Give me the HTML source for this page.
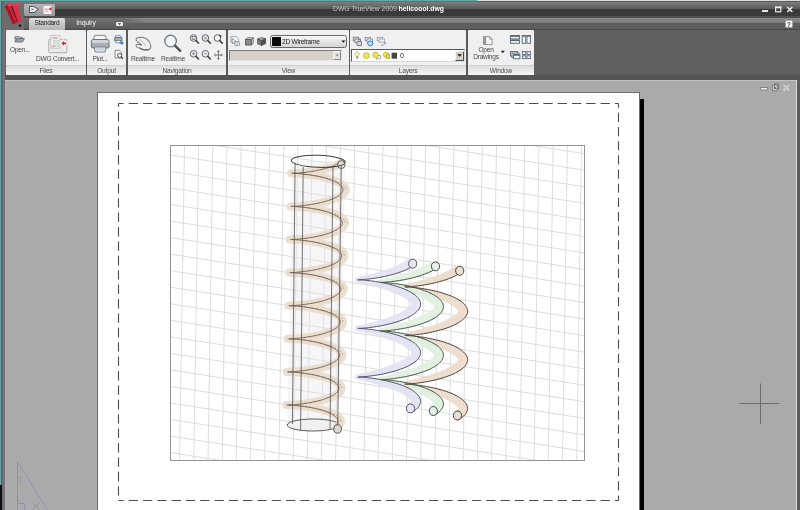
<!DOCTYPE html>
<html><head><meta charset="utf-8">
<style>
*{box-sizing:border-box;margin:0;padding:0}
html,body{width:800px;height:510px;overflow:hidden;background:#aaa;font-family:"Liberation Sans",sans-serif;}
#root{filter:blur(0.35px);position:absolute;left:0;top:0;width:800px;height:510px;overflow:hidden;background:#aaaaaa}
.abs{position:absolute}
.panel{position:absolute;top:30px;height:45px;background:#f0f0f0;border-radius:1px}
.plabel{position:absolute;left:0;right:0;bottom:0;height:10px;background:linear-gradient(#dedede,#f4f4f4);border-top:1px solid #d0d0d0;font-size:6.6px;line-height:9px;text-align:center;color:#505050;letter-spacing:-0.2px}
.t{position:absolute;font-size:6.6px;color:#484848;white-space:nowrap;line-height:8px;text-align:center;letter-spacing:-0.25px}
svg{position:absolute;left:0;top:0;overflow:visible}
</style></head><body><div id="root">

<!-- chrome backgrounds -->
<div class="abs" style="left:0;top:0;width:800px;height:80px;background:#606060"></div>
<div class="abs" style="left:0;top:2px;width:800px;height:7px;background:linear-gradient(#7e7e7e,#585858)"></div>
<div class="abs" style="left:0;top:9px;width:800px;height:7px;background:#3a3a3a"></div>
<div class="abs" style="left:0;top:16px;width:800px;height:2px;background:#4e4e4e"></div>
<div class="abs" style="left:0;top:18px;width:800px;height:5px;background:linear-gradient(#8a8a8a,#7a7a7a)"></div>
<div class="abs" style="left:0;top:23px;width:800px;height:6px;background:#5c5e5e"></div>
<div class="abs" style="left:0;top:29px;width:800px;height:1px;background:#474949"></div>
<div class="abs" style="left:0;top:75px;width:800px;height:5px;background:#545454"></div>
<!-- top border -->
<div class="abs" style="left:0;top:0;width:800px;height:1px;background:#dcdcdc"></div>
<div class="abs" style="left:0;top:1px;width:800px;height:1px;background:#5a5a5a"></div>
<div class="abs" style="left:0;top:0;width:477px;height:1px;background:#62a6a8"></div><div class="abs" style="left:0;top:1px;width:477px;height:1px;background:#4a7a80"></div>

<!-- doc area -->
<div class="abs" style="left:5px;top:80px;width:792px;height:430px;background:#aaaaaa;border-top:1px solid #c4c4c4"></div>
<div class="abs" style="left:796px;top:80px;width:1px;height:430px;background:#dadada"></div>
<div class="abs" style="left:797px;top:80px;width:3px;height:430px;background:#5c5c5c"></div>
<!-- left frame -->
<div class="abs" style="left:2px;top:30px;width:1px;height:480px;background:#686c78"></div><div class="abs" style="left:3px;top:30px;width:2px;height:480px;background:#7a7076"></div><div class="abs" style="left:5px;top:81px;width:1px;height:429px;background:#b0b0ad"></div><div class="abs" style="left:2px;top:2px;width:2px;height:28px;background:#565656"></div>
<div class="abs" style="left:0;top:0;width:1px;height:485px;background:#66a4a6"></div><div class="abs" style="left:1px;top:1px;width:1px;height:484px;background:#46686e"></div>
<div class="abs" style="left:0;top:485px;width:2px;height:25px;background:#101010"></div>

<!-- app button + quick access -->
<div class="abs" style="left:2px;top:3px;width:22px;height:27px;background:#6c6c6c"></div>
<div class="abs" style="left:24px;top:4px;width:31px;height:12px;background:linear-gradient(#b4b4b4,#989898);border-radius:1px"></div>
<!-- tabs -->
<div class="abs" style="left:24px;top:18px;width:120px;height:11px;background:linear-gradient(#707070,#5a5a5a);-webkit-mask-image:linear-gradient(90deg,#000 80%,transparent);mask-image:linear-gradient(90deg,#000 80%,transparent)"></div>
<div class="abs" style="left:29px;top:18px;width:36px;height:12px;background:linear-gradient(#dcdcdc,#b4b4b4);border-radius:2px 2px 0 0"></div>
<div class="t" style="left:29px;top:19px;width:36px;color:#1c1c1c;font-size:6.6px">Standard</div>
<div class="t" style="left:70px;top:19px;width:32px;color:#f4f4f4;font-size:6.8px;letter-spacing:-0.15px">Inquiry</div>
<div class="abs" style="left:116px;top:22px;width:7px;height:4px;background:#e8e8e8;border-radius:1px"></div>
<!-- title -->
<div class="t" style="left:333px;top:5px;color:#c4c4c4;font-size:6.8px;letter-spacing:0;text-align:left">DWG TrueView 2009 <b style="color:#fff">helicoool.dwg</b></div>

<!-- panels -->
<div class="panel" style="left:6px;width:80px"><div class="plabel">Files</div></div>
<div class="panel" style="left:87px;width:39px"><div class="plabel">Output</div></div>
<div class="panel" style="left:128px;width:98px"><div class="plabel">Navigation</div></div>
<div class="panel" style="left:228px;width:121px"><div class="plabel">View</div></div>
<div class="panel" style="left:350px;width:116px"><div class="plabel">Layers</div></div>
<div class="panel" style="left:468px;width:66px"><div class="plabel">Window</div></div>
<div class="abs" style="left:86px;top:30px;width:1px;height:45px;background:#5a5a5a"></div>
<div class="abs" style="left:126px;top:30px;width:2px;height:45px;background:#5a5a5a"></div>
<div class="abs" style="left:226px;top:30px;width:2px;height:45px;background:#5a5a5a"></div>
<div class="abs" style="left:349px;top:30px;width:1px;height:45px;background:#5a5a5a"></div>
<div class="abs" style="left:466px;top:30px;width:2px;height:45px;background:#5a5a5a"></div>

<!-- panel texts -->
<div class="t" style="left:8px;top:46px;width:24px">Open...</div>
<div class="t" style="left:34px;top:55px;width:47px">DWG Convert...</div>
<div class="t" style="left:88px;top:55px;width:24px">Plot...</div>
<div class="t" style="left:129px;top:55px;width:28px">Realtime</div>
<div class="t" style="left:159px;top:55px;width:28px">Realtime</div>
<div class="t" style="left:471px;top:46px;width:30px">Open</div>
<div class="t" style="left:471px;top:53px;width:30px">Drawings</div>

<!-- view dropdowns -->
<div class="abs" style="left:270px;top:35px;width:77px;height:13px;border:1px solid #686868;border-radius:2.5px;background:linear-gradient(#f6f6f6,#d4d4d4)"></div>
<div class="abs" style="left:272px;top:37px;width:9px;height:9px;background:#0c0c0c"></div>
<div class="t" style="left:282px;top:38px;color:#202020;font-size:6.6px;text-align:left">2D Wireframe</div>
<div class="abs" style="left:229px;top:49.5px;width:113px;height:11.5px;background:#d6d2ca;border:1px solid #7c7c7c;border-right-color:#e8e8e8;border-bottom-color:#e8e8e8"></div>
<div class="abs" style="left:333px;top:51px;width:8px;height:9px;background:#e4e2de;border:1px solid #f4f4f4;border-right-color:#8c8c8c;border-bottom-color:#8c8c8c"></div>
<!-- layers dropdown -->
<div class="abs" style="left:351px;top:49px;width:114px;height:12.5px;background:#fff;border:1px solid #585858;border-right-color:#d8d8d8;border-bottom-color:#d8d8d8"></div>
<div class="abs" style="left:455px;top:51px;width:9px;height:9.5px;background:#d4d0c8;border:1px solid #f0f0f0;border-right-color:#505050;border-bottom-color:#505050"></div>
<div class="t" style="left:400px;top:51.7px;color:#202020;font-size:7px;text-align:left">0</div>

<!-- paper -->
<div class="abs" style="left:640px;top:99px;width:4px;height:411px;background:#000"></div>
<div class="abs" style="left:97px;top:92px;width:543px;height:420px;background:#fff;border:1px solid #6e6e6e"></div>

<svg width="800" height="510" viewBox="0 0 800 510">
<!-- ICONS -->
<!-- app logo -->
<g>
<path d="M4.8 6 L9.6 4.8 L17.4 22.2 L12.8 24.6 Z" fill="#a41626"/>
<path d="M7.6 5.2 L9.6 4.8 L17.4 22.2 L15.6 23.2 Z" fill="#cc2236"/>
<path d="M10.4 5 L12 4.6 L18.6 21.6 L17.4 22.2 Z" fill="#64141f"/>
<path d="M12 4.4 L16.8 3.8 L21.4 20.2 L18.2 22.4 Z" fill="#e22e42"/>
<path d="M7.4 3.2 L20 2.8 L20.8 5.4 L8 6.4 Z" fill="#ea3c4e"/>
<circle cx="20" cy="25.6" r="1.2" fill="#0a0a0a"/>
</g>
<!-- quick access icons -->
<g>
<path d="M29.5 6.5 h4.2 l4.6 2.8 l-4.2 3.2 h-4.6 z" fill="#e8eef4" stroke="#4a5058" stroke-width="1"/>
<path d="M31.5 8.2 l3 1.2 l-3 1.4 z" fill="#7a8aa0"/>
<rect x="43.5" y="6" width="8" height="8" fill="#f6f6f6"/>
<rect x="44.5" y="8" width="4" height="4.5" fill="#e8c8c8"/>
<path d="M51.5 7 l-3 2 l3 2 z" fill="#d82030"/>
</g>
<!-- tab small button arrow -->
<path d="M118 23.2 h3 l-1.5 1.8 z" fill="#303030"/>
<!-- help -->
<rect x="785.5" y="20.5" width="7" height="7" rx="1" fill="#f4f4f4" stroke="#9a9a9a" stroke-width="0.6"/>
<text x="789" y="26.6" font-size="7" font-weight="bold" text-anchor="middle" fill="#505050" font-family="Liberation Sans">?</text>
<!-- window controls -->
<rect x="762" y="10" width="6" height="2" fill="#e8e8e8"/>
<rect x="775.6" y="7.2" width="5.2" height="4.6" fill="none" stroke="#e8e8e8" stroke-width="1.2"/>
<rect x="775" y="6.6" width="6.4" height="1.6" fill="#e8e8e8"/>
<path d="M787.3 7 l5 5 M792.3 7 l-5 5" stroke="#f0f0f0" stroke-width="1.5"/>
<!-- doc controls -->
<rect x="760.5" y="87.5" width="7" height="2.4" fill="#f0f0f0" stroke="#7a7a7a" stroke-width="0.8"/>
<rect x="772.8" y="85.2" width="4.4" height="5.6" fill="#ececec" stroke="#707070" stroke-width="0.9"/>
<rect x="774.6" y="83.8" width="4" height="5" fill="none" stroke="#707070" stroke-width="0.8"/>
<rect x="774.4" y="87" width="1.4" height="1.8" fill="#505050"/>
<path d="M783.6 85 l5.4 5.4 M789 85 l-5.4 5.4" stroke="#f0f0f0" stroke-width="1.6"/>
<path d="M783.6 85 l5.4 5.4 M789 85 l-5.4 5.4" stroke="#808080" stroke-width="0.5"/>

<!-- FILES: open folder -->
<g>
<path d="M15.2 36.6 h4 l0.8 1 h2.4 v1.2 h-7.2 z" fill="#c8ccd4" stroke="#6a7078" stroke-width="0.8"/>
<path d="M15.2 42 l1.6 -3.4 h7.6 l-2 3.4 z" fill="#9aa4b4" stroke="#5a6270" stroke-width="0.8"/>
<path d="M15.2 37 v5" stroke="#6a7078" stroke-width="0.8"/>
</g>
<!-- DWG convert -->
<g>
<rect x="48.8" y="39.2" width="18" height="13.4" rx="1" fill="#ebebeb" stroke="#b6b6b6" stroke-width="1.1"/>
<rect x="50.8" y="35.4" width="9.2" height="12.8" fill="#f8f8f8" stroke="#c0c0c0" stroke-width="0.9"/>
<rect x="52" y="36.8" width="6" height="2.2" fill="#e4b8c0"/>
<rect x="53.4" y="40" width="5.4" height="6.4" fill="#d4e8dc" stroke="#b4ccbc" stroke-width="0.6"/>
<rect x="51.6" y="45.6" width="3.6" height="1.6" fill="#dca8b4"/>
<ellipse cx="63.8" cy="43.2" rx="3.6" ry="3.8" fill="#fbe9ec"/>
<path d="M61.4 43.3 l2.6 -2.4 v1.5 h2.2 v1.9 h-2.2 v1.5 z" fill="#c82842"/>
</g>
<!-- printer big -->
<g>
<path d="M94.6 35.4 h10.8 l1.2 4.6 h-13.2 z" fill="#f6f6f6" stroke="#7c8088" stroke-width="0.9"/>
<rect x="91.4" y="39.6" width="17.6" height="8.4" rx="1.6" fill="#aab0b8" stroke="#5c626a" stroke-width="0.9"/>
<rect x="91.8" y="40" width="16.8" height="3" rx="1" fill="#cfd4da"/>
<path d="M94.2 47 h12 l-1 5 h-10 z" fill="#dfe5ea" stroke="#6c727a" stroke-width="0.8"/>
<rect x="95.4" y="48.6" width="9.6" height="1" fill="#a8c8d0"/>
</g>
<!-- small printer w/ blue bg -->
<g>
<rect x="113" y="33.6" width="11" height="12" rx="1" fill="#e6f0fa"/>
<path d="M115.8 35.6 h4.8 l0.6 2 h-6 z" fill="#fff" stroke="#6a7078" stroke-width="0.7"/>
<rect x="114.6" y="37.4" width="7.4" height="3.8" rx="0.8" fill="#a8b0ba" stroke="#586068" stroke-width="0.8"/>
<rect x="115.8" y="40.6" width="5" height="2.2" fill="#e8eef2" stroke="#6a7078" stroke-width="0.6"/>
<path d="M119.4 42.4 h2.2 v-1.4 l2 2 l-2 2 v-1.4 h-2.2 z" fill="#2a5ea8"/>
</g>
<!-- page preview -->
<g>
<path d="M115 50.4 h4.6 l2 2 v5.6 h-6.6 z" fill="#f4f4f4" stroke="#70767e" stroke-width="0.8"/>
<circle cx="119.6" cy="55.4" r="2.1" fill="#e8f0f4" stroke="#4a5058" stroke-width="0.9"/>
<path d="M121.2 57 l1.8 1.8" stroke="#3a4048" stroke-width="1.2"/>
</g>
<!-- hand -->
<g>
<path d="M136.2 38.8 C136.6 37.6 140 37.2 143.6 37.6 C147.6 38.4 150.6 42.6 150.8 46.6 C150.6 49 148.4 50.2 146 50.2 C143.4 50.2 141.4 49.2 139.4 48 C137.8 47.6 136.2 47 136 45.8 C136 44.6 137.4 44.2 138.6 44.4 L140.8 44.6 C140 43.2 138.2 42.4 137 41.4 C136.2 40.6 136 39.6 136.2 38.8 Z" fill="#f2f2f2" stroke="#848484" stroke-width="1.1"/>
<path d="M139.4 48 C142 49.6 146 50.2 148.6 49.4" fill="none" stroke="#6a6a6a" stroke-width="1.2"/>
<circle cx="141" cy="44.8" r="0.9" fill="#606060"/>
<path d="M138.5 39.5 C141.5 40.5 144 42.5 145.5 46" fill="none" stroke="#d0d0d0" stroke-width="1.4"/>
</g>
<!-- magnifier big -->
<g>
<circle cx="170.6" cy="41" r="5.8" fill="#eef6f8" stroke="#70747a" stroke-width="1.3"/>
<path d="M175.2 45.8 l5 5" stroke="#505050" stroke-width="2.4" stroke-linecap="round"/>
</g>
<!-- small zoom icons -->
<g fill="#f0f4f6" stroke="#50565c" stroke-width="0.9">
<circle cx="193.6" cy="38" r="3.3"/><circle cx="205.4" cy="38" r="3.3"/><circle cx="217.4" cy="38" r="3.3"/>
<circle cx="193.6" cy="53.8" r="3.3"/><circle cx="205.4" cy="53.8" r="3.3"/>
</g>
<g stroke="#383c40" stroke-width="1.5" stroke-linecap="round">
<path d="M196 40.6 l2.6 2.6 M207.8 40.6 l2.6 2.6 M219.8 40.6 l2.6 2.6 M196 56.4 l2.6 2.6 M207.8 56.4 l2.6 2.6"/>
</g>
<g stroke="#60666c" stroke-width="0.7" fill="none">
<rect x="192.2" y="36.4" width="2.8" height="3.2"/>
<path d="M203.6 36.2 l3.6 3.6 M207.2 36.2 l-3.6 3.6"/>
<path d="M219 35 l2.4 1 l-1.6 1.4" stroke="#202020" stroke-width="0.9"/>
<path d="M192 53.8 h3.2 M193.6 52.2 v3.2"/>
<path d="M203.8 53.8 h3.2"/>
</g>
<g stroke="#70767c" stroke-width="1" fill="none">
<path d="M214.4 55 h8 M218.4 50.4 v9.2"/>
<path d="M214.4 55 l1.4 -1.2 M214.4 55 l1.4 1.2 M222.4 55 l-1.4 -1.2 M222.4 55 l-1.4 1.2 M218.4 50.4 l-1.2 1.4 M218.4 50.4 l1.2 1.4 M218.4 59.6 l-1.2 -1.4 M218.4 59.6 l1.2 -1.4" stroke-width="0.8"/>
</g>
<!-- view icons -->
<g>
<path d="M230.8 36.6 h5.4 l2 2 v3.4 h-7.4 z" fill="#fafafa" stroke="#8a9098" stroke-width="0.8"/>
<path d="M232 38.6 l0.4 5.2 l1.4 -1.4 l1.2 2 l0.9 -0.5 l-1.2 -2 l1.9 -0.3 z" fill="#fff" stroke="#50565e" stroke-width="0.6"/>
<rect x="234.6" y="41.6" width="5" height="4" rx="0.8" fill="#c8d6e4" stroke="#7c8c9c" stroke-width="0.7"/>
<rect x="245.4" y="39.6" width="6" height="5.4" fill="#8c8c8c" stroke="#484848" stroke-width="0.8"/>
<path d="M245.4 39.6 l1.8 -1.8 h6 v5.4 l-1.8 1.8 M251.4 39.6 l1.8 -1.8" fill="none" stroke="#484848" stroke-width="0.8"/>
<path d="M257.6 39 l4 1.4 v5 l-4 -1.6 z" fill="#7a7a7a" stroke="#404040" stroke-width="0.7"/>
<path d="M261.6 40.4 l4 -1.6 v4.8 l-4 1.8 z" fill="#505050" stroke="#404040" stroke-width="0.7"/>
<path d="M257.6 39 l4 -1.4 l4 1.2 l-4 1.6 z" fill="#b4b4b4" stroke="#404040" stroke-width="0.7"/>
</g>
<!-- dropdown arrows -->
<path d="M341.4 40.4 h4 l-2 2.4 z" fill="#101010"/>
<path d="M335.4 54.4 h3.6 l-1.8 2.2 z" fill="#8c8c8c"/>
<path d="M457.4 54.2 h4.4 l-2.2 2.6 z" fill="#101010"/>
<path d="M500.8 50.8 h4 l-2 2.4 z" fill="#202020"/>
<!-- layer icons row -->
<g>
<rect x="353.2" y="37.2" width="5.4" height="3.8" fill="#ececec" stroke="#6c7278" stroke-width="0.8"/>
<rect x="355" y="39" width="5.4" height="3.8" fill="#ececec" stroke="#6c7278" stroke-width="0.8"/>
<rect x="357" y="41.6" width="4.6" height="4" rx="0.6" fill="#d8dce0" stroke="#5c6268" stroke-width="0.8"/>
<path d="M358.2 41.6 v-1 a1.1 1.1 0 0 1 2.2 0 v1" fill="none" stroke="#5c6268" stroke-width="0.7"/>
<rect x="365.2" y="37.4" width="5.4" height="3.2" fill="#eef2f8" stroke="#7a8cac" stroke-width="0.8"/>
<rect x="367" y="39" width="5.4" height="3.2" fill="#eef2f8" stroke="#7a8cac" stroke-width="0.8"/>
<circle cx="370.2" cy="43.4" r="2.5" fill="#c0dcf6" stroke="#3a7cc8" stroke-width="1"/>
<rect x="377.2" y="37.4" width="5.4" height="3.2" fill="#f0f4f8" stroke="#909cac" stroke-width="0.8"/>
<rect x="379" y="39" width="5.4" height="3.2" fill="#f0f4f8" stroke="#909cac" stroke-width="0.8"/>
<path d="M381 45.2 c2.8 0.4 4.2 -0.8 4 -2.8 l1.1 1.1 m-1.1 -1.1 l-1.1 0.9" fill="none" stroke="#8090a4" stroke-width="0.9"/>
</g>
<!-- layer dropdown inner icons -->
<g transform="translate(0 0.7)">
<path d="M357.2 51.2 c-2 0 -2.6 2.2 -1.4 3.6 l0.4 1 h2 l0.4 -1 c1.2 -1.4 0.6 -3.6 -1.4 -3.6 z" fill="#fdf8b0" stroke="#a8a060" stroke-width="0.6"/>
<rect x="356.2" y="56" width="2" height="1.8" fill="#8a8a8a"/>
<circle cx="366.4" cy="55" r="3" fill="#f0e848" stroke="#b4aa30" stroke-width="0.7"/>
<rect x="376.6" y="54.6" width="3.6" height="3.6" fill="#fafafa" stroke="#70767c" stroke-width="0.6"/>
<circle cx="375.6" cy="54.2" r="2.8" fill="#f0e848" stroke="#b4aa30" stroke-width="0.7"/>
<circle cx="386" cy="54" r="2.6" fill="#f0e848" stroke="#b4aa30" stroke-width="0.7"/>
<rect x="386.4" y="53.4" width="3.2" height="4.6" rx="0.6" fill="#e8dc50" stroke="#8c8630" stroke-width="0.6"/>
<rect x="391.6" y="52" width="5.4" height="6" fill="#45454d"/>
</g>
<!-- window panel icons -->
<g>
<path d="M483.4 36.6 h3.6 v7.8 h-3.6 z" fill="#9a9a9a" stroke="#787878" stroke-width="0.6"/>
<path d="M485.6 36.6 h4 l2.6 2.6 v5.4 h-6.6 z" fill="#f6f6f6" stroke="#808080" stroke-width="0.8"/>
<path d="M489.6 36.6 v2.6 h2.6" fill="none" stroke="#808080" stroke-width="0.7"/>
</g>
<g fill="#f2f4f6" stroke="#5a6474" stroke-width="0.9">
<rect x="510.5" y="35.5" width="9" height="3.4"/><rect x="510.5" y="39.9" width="9" height="3.4"/>
<rect x="522.2" y="35.5" width="3.6" height="7.8"/><rect x="526.9" y="35.5" width="3.6" height="7.8"/>
<rect x="510.5" y="51.5" width="7" height="4.6"/><rect x="512" y="53" width="7" height="4.6"/><rect x="513.5" y="54.6" width="6.4" height="4.2"/>
<rect x="522.4" y="51.6" width="3.4" height="2.8"/><rect x="527" y="51.6" width="3.4" height="2.8"/>
<rect x="522.4" y="55.8" width="3.4" height="2.8"/><rect x="527" y="55.8" width="3.4" height="2.8"/>
</g>
<g fill="#5a6474">
<rect x="510.5" y="35.5" width="9" height="1.4"/><rect x="510.5" y="39.9" width="9" height="1.2"/>
<rect x="522.2" y="35.5" width="3.6" height="1.2"/><rect x="526.9" y="35.5" width="3.6" height="1.2"/>
<rect x="513.5" y="54.6" width="6.4" height="1.2"/>
</g>


<!-- dashed margin -->
<g fill="none" stroke="#4c4c4c" stroke-width="1.1">
<path d="M118.5 103.5 H618.5" stroke-dasharray="9.3 5" stroke-dashoffset="4.1"/>
<path d="M118.5 500.5 H618.5" stroke-dasharray="9.3 5" stroke-dashoffset="4.1"/>
<path d="M118.5 103.5 V500.5" stroke-dasharray="9.4 5" stroke-dashoffset="6.1"/>
<path d="M618.5 103.5 V500.5" stroke-dasharray="9.2 4.975" stroke-dashoffset="4.9"/>
</g>
<!-- grid -->
<defs><clipPath id="gc"><rect x="170" y="145" width="414" height="315"/></clipPath></defs>
<g clip-path="url(#gc)"><path d="M170.3 145 L165.4 460 M184.5 145 L179.6 460 M198.7 145 L193.8 460 M212.9 145 L208 460 M227 145 L222.2 460 M241.2 145 L236.3 460 M255.4 145 L250.5 460 M269.6 145 L264.7 460 M283.8 145 L278.9 460 M297.9 145 L293.1 460 M312.1 145 L307.2 460 M326.3 145 L321.4 460 M340.5 145 L335.6 460 M354.7 145 L349.8 460 M368.8 145 L364 460 M383 145 L378.1 460 M397.2 145 L392.3 460 M411.4 145 L406.5 460 M425.6 145 L420.7 460 M439.7 145 L434.9 460 M453.9 145 L449 460 M468.1 145 L463.2 460 M482.3 145 L477.4 460 M496.5 145 L491.6 460 M510.6 145 L505.8 460 M524.8 145 L519.9 460 M539 145 L534.1 460 M553.2 145 L548.3 460 M567.4 145 L562.5 460 M581.5 145 L576.7 460 M595.7 145 L590.8 460 M170 72.1 L584 137.1 M170 88.6 L584 153.6 M170 105.2 L584 170.2 M170 121.7 L584 186.7 M170 138.3 L584 203.3 M170 154.8 L584 219.8 M170 171.3 L584 236.3 M170 187.9 L584 252.9 M170 204.4 L584 269.4 M170 221 L584 286 M170 237.5 L584 302.5 M170 254 L584 319 M170 270.6 L584 335.6 M170 287.1 L584 352.1 M170 303.7 L584 368.7 M170 320.2 L584 385.2 M170 336.7 L584 401.7 M170 353.3 L584 418.3 M170 369.8 L584 434.8 M170 386.4 L584 451.4 M170 402.9 L584 467.9 M170 419.4 L584 484.4 M170 436 L584 501 M170 452.5 L584 517.5" fill="none" stroke="#d9d9d9" stroke-width="0.9"/></g>
<rect x="170.5" y="145.5" width="414" height="315" fill="none" stroke="#949494" stroke-width="1"/>

<!-- cylinder -->
<path d="M292 161 L287.5 425 L339 425 L345.5 161 Z" fill="#e8e8ee" fill-opacity="0.4"/>
<ellipse cx="313.2" cy="425" rx="26" ry="6" fill="#f0f0f0" stroke="#484848" stroke-width="0.9"/>
<!-- helix band -->
<path d="M341.2 163.1 L340.3 163.6 L339.4 164 L338.5 164.5 L337.5 164.9 L336.5 165.4 L335.4 165.8 L334.3 166.2 L333.1 166.6 L331.9 167 L330.7 167.4 L329.4 167.8 L328.1 168.1 L326.8 168.5 L325.5 168.8 L324.1 169.1 L322.8 169.4 L321.4 169.7 L320 170 L318.6 170.3 L317.3 170.6 L315.9 170.8 L314.5 171 L313.2 171.2 L311.8 171.4 L310.5 171.6 L309.2 171.8 L307.9 172 L306.7 172.1 L305.4 172.3 L304.2 172.4 L303.1 172.5 L302 172.6 L300.9 172.7 L299.9 172.8 L298.9 172.9 L297.9 173 L297.1 173 L296.2 173.1 L295.5 173.1 L294.7 173.2 L294.1 173.2 L293.5 173.2 L293 173.3 L292.5 173.3 L292.1 173.3 L291.8 173.3 L291.5 173.3 L291.3 173.3 L291.2 173.3 L291.1 173.3 L291.1 173.3 L291.2 173.3 L291.3 173.3 L291.5 173.3 L291.8 173.3 L292.2 173.3 L292.6 173.3 L293.1 173.3 L293.6 173.4 L294.2 173.4 L294.9 173.4 L295.6 173.5 L296.4 173.5 L297.2 173.6 L298.1 173.6 L299 173.7 L300 173.8 L301 173.9 L302.1 174 L303.2 174.1 L304.4 174.2 L305.6 174.3 L306.8 174.5 L308.1 174.6 L309.3 174.8 L310.6 175 L312 175.2 L313.3 175.4 L314.7 175.6 L316 175.8 L317.4 176.1 L318.8 176.3 L320.1 176.6 L321.5 176.9 L322.8 177.2 L324.2 177.5 L325.5 177.8 L326.8 178.2 L328.1 178.5 L329.4 178.9 L330.6 179.3 L331.8 179.6 L333 180 L334.2 180.5 L335.3 180.9 L336.3 181.3 L337.3 181.7 L338.3 182.2 L339.2 182.6 L340.1 183.1 L340.9 183.6 L341.6 184.1 L342.3 184.6 L343 185.1 L343.5 185.6 L344 186.1 L344.5 186.6 L344.9 187.1 L345.2 187.6 L345.4 188.1 L345.6 188.7 L345.7 189.2 L345.8 189.7 L345.7 190.2 L345.6 190.8 L345.5 191.3 L345.2 191.8 L344.9 192.3 L344.6 192.8 L344.1 193.4 L343.7 193.9 L343.1 194.4 L342.5 194.9 L341.8 195.4 L341 195.9 L340.2 196.3 L339.4 196.8 L338.5 197.3 L337.5 197.7 L336.5 198.2 L335.5 198.6 L334.4 199 L333.2 199.4 L332.1 199.8 L330.9 200.2 L329.6 200.6 L328.4 201 L327.1 201.3 L325.7 201.7 L324.4 202 L323.1 202.3 L321.7 202.6 L320.3 202.9 L318.9 203.2 L317.6 203.5 L316.2 203.7 L314.8 204 L313.4 204.2 L312.1 204.4 L310.8 204.6 L309.4 204.8 L308.1 205 L306.9 205.1 L305.6 205.3 L304.4 205.4 L303.2 205.6 L302.1 205.7 L301 205.8 L299.9 205.9 L298.9 206 L297.9 206 L297 206.1 L296.1 206.2 L295.3 206.2 L294.6 206.3 L293.9 206.3 L293.2 206.3 L292.7 206.3 L292.1 206.4 L291.7 206.4 L291.3 206.4 L291 206.4 L290.8 206.4 L290.6 206.4 L290.5 206.4 L290.4 206.4 L290.4 206.4 L290.5 206.4 L290.7 206.4 L290.9 206.4 L291.2 206.4 L291.6 206.4 L292 206.4 L292.5 206.5 L293.1 206.5 L293.7 206.5 L294.4 206.5 L295.1 206.6 L295.9 206.6 L296.8 206.7 L297.7 206.8 L298.6 206.8 L299.6 206.9 L300.7 207 L301.8 207.1 L302.9 207.2 L304.1 207.3 L305.3 207.5 L306.5 207.6 L307.8 207.8 L309 208 L310.4 208.1 L311.7 208.3 L313 208.6 L314.4 208.8 L315.7 209 L317.1 209.3 L318.5 209.5 L319.8 209.8 L321.2 210.1 L322.6 210.4 L323.9 210.7 L325.2 211 L326.5 211.4 L327.8 211.7 L329.1 212.1 L330.3 212.5 L331.5 212.9 L332.7 213.3 L333.8 213.7 L334.9 214.1 L335.9 214.5 L336.9 215 L337.9 215.4 L338.8 215.9 L339.6 216.3 L340.4 216.8 L341.2 217.3 L341.8 217.8 L342.5 218.3 L343 218.8 L343.5 219.3 L343.9 219.8 L344.3 220.3 L344.6 220.9 L344.8 221.4 L345 221.9 L345.1 222.4 L345.1 223 L345 223.5 L344.9 224 L344.7 224.5 L344.5 225.1 L344.2 225.6 L343.8 226.1 L343.3 226.6 L342.8 227.1 L342.2 227.6 L341.6 228.1 L340.9 228.6 L340.1 229.1 L339.3 229.6 L338.5 230 L337.5 230.5 L336.6 230.9 L335.5 231.4 L334.5 231.8 L333.4 232.2 L332.2 232.7 L331 233.1 L329.8 233.4 L328.6 233.8 L327.3 234.2 L326 234.5 L324.7 234.9 L323.3 235.2 L322 235.5 L320.6 235.8 L319.2 236.1 L317.9 236.4 L316.5 236.6 L315.1 236.9 L313.7 237.1 L312.4 237.4 L311 237.6 L309.7 237.8 L308.4 237.9 L307.1 238.1 L305.8 238.3 L304.6 238.4 L303.4 238.6 L302.2 238.7 L301.1 238.8 L300 238.9 L298.9 239 L297.9 239.1 L297 239.2 L296.1 239.2 L295.2 239.3 L294.4 239.3 L293.7 239.4 L293 239.4 L292.4 239.4 L291.8 239.4 L291.3 239.5 L290.9 239.5 L290.5 239.5 L290.2 239.5 L290 239.5 L289.9 239.5 L289.8 239.5 L289.7 239.5 L289.8 239.5 L289.9 239.5 L290.1 239.5 L290.3 239.5 L290.7 239.5 L291 239.5 L291.5 239.5 L292 239.6 L292.6 239.6 L293.2 239.6 L293.9 239.7 L294.7 239.7 L295.5 239.7 L296.3 239.8 L297.3 239.9 L298.2 239.9 L299.2 240 L300.3 240.1 L301.4 240.2 L302.6 240.4 L303.7 240.5 L304.9 240.6 L306.2 240.8 L307.5 240.9 L308.7 241.1 L310.1 241.3 L311.4 241.5 L312.7 241.7 L314.1 241.9 L315.5 242.2 L316.8 242.4 L318.2 242.7 L319.6 243 L320.9 243.3 L322.3 243.6 L323.6 243.9 L324.9 244.2 L326.2 244.6 L327.5 244.9 L328.8 245.3 L330 245.7 L331.2 246.1 L332.3 246.5 L333.4 246.9 L334.5 247.3 L335.5 247.8 L336.5 248.2 L337.5 248.7 L338.4 249.1 L339.2 249.6 L340 250.1 L340.7 250.6 L341.3 251 L341.9 251.5 L342.5 252.1 L343 252.6 L343.4 253.1 L343.7 253.6 L344 254.1 L344.2 254.6 L344.3 255.2 L344.4 255.7 L344.4 256.2 L344.3 256.7 L344.2 257.3 L344 257.8 L343.7 258.3 L343.4 258.8 L343 259.3 L342.5 259.9 L342 260.4 L341.4 260.9 L340.7 261.4 L340 261.9 L339.2 262.3 L338.4 262.8 L337.5 263.3 L336.6 263.7 L335.6 264.2 L334.6 264.6 L333.5 265 L332.4 265.5 L331.2 265.9 L330 266.3 L328.8 266.7 L327.5 267 L326.2 267.4 L324.9 267.7 L323.6 268.1 L322.3 268.4 L320.9 268.7 L319.5 269 L318.2 269.3 L316.8 269.6 L315.4 269.8 L314 270.1 L312.7 270.3 L311.3 270.5 L310 270.7 L308.6 270.9 L307.3 271.1 L306 271.3 L304.8 271.4 L303.5 271.6 L302.3 271.7 L301.2 271.8 L300.1 271.9 L299 272 L298 272.1 L297 272.2 L296 272.3 L295.1 272.3 L294.3 272.4 L293.5 272.4 L292.8 272.5 L292.1 272.5 L291.5 272.5 L291 272.6 L290.5 272.6 L290.1 272.6 L289.8 272.6 L289.5 272.6 L289.3 272.6 L289.1 272.6 L289.1 272.6 L289.1 272.6 L289.1 272.6 L289.3 272.6 L289.5 272.6 L289.7 272.6 L290.1 272.6 L290.5 272.6 L291 272.6 L291.5 272.7 L292.1 272.7 L292.7 272.7 L293.4 272.8 L294.2 272.8 L295 272.9 L295.9 272.9 L296.9 273 L297.8 273.1 L298.9 273.2 L299.9 273.3 L301.1 273.4 L302.2 273.5 L303.4 273.6 L304.6 273.8 L305.9 273.9 L307.1 274.1 L308.4 274.3 L309.8 274.5 L311.1 274.7 L312.5 274.9 L313.8 275.1 L315.2 275.4 L316.5 275.6 L317.9 275.9 L319.3 276.2 L320.6 276.5 L322 276.8 L323.3 277.1 L324.6 277.4 L325.9 277.8 L327.2 278.1 L328.4 278.5 L329.7 278.9 L330.8 279.3 L332 279.7 L333.1 280.1 L334.1 280.5 L335.2 281 L336.1 281.4 L337.1 281.9 L337.9 282.4 L338.7 282.8 L339.5 283.3 L340.2 283.8 L340.8 284.3 L341.4 284.8 L341.9 285.3 L342.4 285.8 L342.8 286.3 L343.1 286.8 L343.4 287.4 L343.6 287.9 L343.7 288.4 L343.7 288.9 L343.7 289.5 L343.6 290 L343.5 290.5 L343.2 291 L343 291.6 L342.6 292.1 L342.2 292.6 L341.7 293.1 L341.1 293.6 L340.5 294.1 L339.8 294.6 L339.1 295.1 L338.3 295.6 L337.5 296 L336.6 296.5 L335.6 297 L334.6 297.4 L333.6 297.8 L332.5 298.3 L331.4 298.7 L330.2 299.1 L329 299.5 L327.7 299.9 L326.5 300.2 L325.2 300.6 L323.9 300.9 L322.5 301.3 L321.2 301.6 L319.8 301.9 L318.5 302.2 L317.1 302.5 L315.7 302.7 L314.3 303 L312.9 303.2 L311.6 303.5 L310.2 303.7 L308.9 303.9 L307.6 304.1 L306.3 304.2 L305 304.4 L303.7 304.6 L302.5 304.7 L301.3 304.8 L300.2 305 L299.1 305.1 L298 305.2 L297 305.2 L296 305.3 L295.1 305.4 L294.2 305.5 L293.4 305.5 L292.6 305.5 L291.9 305.6 L291.3 305.6 L290.7 305.6 L290.2 305.7 L289.7 305.7 L289.3 305.7 L289 305.7 L288.7 305.7 L288.6 305.7 L288.4 305.7 L288.4 305.7 L288.4 305.7 L288.5 305.7 L288.6 305.7 L288.9 305.7 L289.2 305.7 L289.5 305.7 L289.9 305.7 L290.4 305.8 L291 305.8 L291.6 305.8 L292.3 305.8 L293 305.9 L293.8 305.9 L294.6 306 L295.5 306 L296.5 306.1 L297.5 306.2 L298.5 306.3 L299.6 306.4 L300.7 306.5 L301.9 306.6 L303.1 306.8 L304.3 306.9 L305.6 307.1 L306.8 307.2 L308.2 307.4 L309.5 307.6 L310.8 307.8 L312.2 308 L313.5 308.3 L314.9 308.5 L316.3 308.8 L317.6 309.1 L319 309.4 L320.4 309.7 L321.7 310 L323 310.3 L324.3 310.6 L325.6 311 L326.9 311.3 L328.1 311.7 L329.3 312.1 L330.5 312.5 L331.6 312.9 L332.7 313.3 L333.8 313.8 L334.8 314.2 L335.7 314.7 L336.6 315.1 L337.5 315.6 L338.3 316.1 L339 316.6 L339.7 317 L340.3 317.5 L340.9 318 L341.4 318.5 L341.8 319.1 L342.2 319.6 L342.5 320.1 L342.7 320.6 L342.9 321.1 L343 321.7 L343 322.2 L343 322.7 L342.9 323.2 L342.7 323.8 L342.5 324.3 L342.2 324.8 L341.8 325.3 L341.4 325.8 L340.8 326.4 L340.3 326.9 L339.6 327.4 L339 327.8 L338.2 328.3 L337.4 328.8 L336.5 329.3 L335.6 329.7 L334.7 330.2 L333.6 330.6 L332.6 331.1 L331.5 331.5 L330.3 331.9 L329.2 332.3 L327.9 332.7 L326.7 333.1 L325.4 333.4 L324.1 333.8 L322.8 334.1 L321.5 334.5 L320.1 334.8 L318.8 335.1 L317.4 335.4 L316 335.7 L314.6 335.9 L313.2 336.2 L311.9 336.4 L310.5 336.6 L309.2 336.8 L307.8 337 L306.5 337.2 L305.2 337.4 L303.9 337.6 L302.7 337.7 L301.5 337.8 L300.3 338 L299.2 338.1 L298.1 338.2 L297 338.3 L296 338.4 L295 338.4 L294.1 338.5 L293.3 338.6 L292.5 338.6 L291.7 338.7 L291 338.7 L290.4 338.7 L289.9 338.7 L289.4 338.8 L288.9 338.8 L288.5 338.8 L288.2 338.8 L288 338.8 L287.8 338.8 L287.7 338.8 L287.7 338.8 L287.7 338.8 L287.9 338.8 L288 338.8 L288.3 338.8 L288.6 338.8 L289 338.8 L289.4 338.8 L289.9 338.9 L290.5 338.9 L291.1 338.9 L291.8 338.9 L292.5 339 L293.3 339 L294.2 339.1 L295.1 339.2 L296.1 339.2 L297.1 339.3 L298.1 339.4 L299.2 339.5 L300.4 339.6 L301.5 339.8 L302.8 339.9 L304 340.1 L305.3 340.2 L306.5 340.4 L307.9 340.6 L309.2 340.8 L310.5 341 L311.9 341.2 L313.3 341.5 L314.6 341.7 L316 342 L317.4 342.2 L318.7 342.5 L320.1 342.8 L321.4 343.2 L322.7 343.5 L324 343.8 L325.3 344.2 L326.6 344.6 L327.8 344.9 L329 345.3 L330.1 345.7 L331.3 346.1 L332.4 346.6 L333.4 347 L334.4 347.4 L335.3 347.9 L336.2 348.4 L337.1 348.8 L337.8 349.3 L338.6 349.8 L339.2 350.3 L339.8 350.8 L340.4 351.3 L340.9 351.8 L341.3 352.3 L341.6 352.8 L341.9 353.3 L342.1 353.9 L342.3 354.4 L342.4 354.9 L342.4 355.4 L342.3 356 L342.2 356.5 L342 357 L341.7 357.5 L341.4 358.1 L341 358.6 L340.5 359.1 L340 359.6 L339.4 360.1 L338.8 360.6 L338.1 361.1 L337.3 361.6 L336.5 362 L335.6 362.5 L334.7 363 L333.7 363.4 L332.7 363.9 L331.6 364.3 L330.5 364.7 L329.3 365.1 L328.1 365.5 L326.9 365.9 L325.7 366.3 L324.4 366.6 L323.1 367 L321.7 367.3 L320.4 367.7 L319 368 L317.7 368.3 L316.3 368.6 L314.9 368.8 L313.5 369.1 L312.2 369.3 L310.8 369.6 L309.4 369.8 L308.1 370 L306.8 370.2 L305.4 370.4 L304.2 370.5 L302.9 370.7 L301.7 370.8 L300.5 371 L299.3 371.1 L298.2 371.2 L297.1 371.3 L296 371.4 L295 371.5 L294.1 371.6 L293.2 371.6 L292.4 371.7 L291.6 371.7 L290.8 371.8 L290.2 371.8 L289.6 371.8 L289 371.9 L288.5 371.9 L288.1 371.9 L287.8 371.9 L287.5 371.9 L287.3 371.9 L287.1 371.9 L287 371.9 L287 371.9 L287.1 371.9 L287.2 371.9 L287.4 371.9 L287.7 371.9 L288 371.9 L288.4 371.9 L288.9 371.9 L289.4 372 L290 372 L290.6 372 L291.3 372.1 L292.1 372.1 L292.9 372.2 L293.8 372.2 L294.7 372.3 L295.7 372.4 L296.7 372.4 L297.8 372.5 L298.9 372.7 L300 372.8 L301.2 372.9 L302.4 373 L303.7 373.2 L305 373.4 L306.2 373.5 L307.6 373.7 L308.9 373.9 L310.2 374.2 L311.6 374.4 L313 374.6 L314.3 374.9 L315.7 375.2 L317.1 375.4 L318.4 375.7 L319.8 376 L321.1 376.4 L322.4 376.7 L323.7 377 L325 377.4 L326.3 377.8 L327.5 378.1 L328.7 378.5 L329.8 378.9 L330.9 379.4 L332 379.8 L333 380.2 L334 380.7 L334.9 381.1 L335.8 381.6 L336.6 382.1 L337.4 382.5 L338.1 383 L338.7 383.5 L339.3 384 L339.8 384.5 L340.3 385 L340.7 385.6 L341 386.1 L341.3 386.6 L341.5 387.1 L341.6 387.6 L341.7 388.2 L341.7 388.7 L341.6 389.2 L341.5 389.8 L341.2 390.3 L341 390.8 L340.6 391.3 L340.2 391.8 L339.7 392.3 L339.2 392.8 L338.6 393.3 L337.9 393.8 L337.2 394.3 L336.4 394.8 L335.5 395.3 L334.6 395.8 L333.7 396.2 L332.7 396.7 L331.7 397.1 L330.6 397.5 L329.5 397.9 L328.3 398.3 L327.1 398.7 L325.9 399.1 L324.6 399.5 L323.3 399.8 L322 400.2 L320.7 400.5 L319.3 400.9 L318 401.2 L316.6 401.5 L315.2 401.7 L313.8 402 L312.5 402.3 L311.1 402.5 L309.7 402.7 L308.4 403 L307 403.2 L305.7 403.3 L304.4 403.5 L303.1 403.7 L301.9 403.8 L300.6 404 L299.4 404.1 L298.3 404.2 L297.2 404.3 L296.1 404.4 L295.1 404.5 L294.1 404.6 L293.2 404.7 L292.3 404.7 L291.4 404.8 L290.7 404.8 L290 404.9 L289.3 404.9 L288.7 404.9 L288.2 405 L287.7 405 L287.3 405 L287 405 L286.7 405 L286.5 405 L286.4 405 L286.4 405 L286.4 405 L286.4 405 L286.6 405 L286.8 405 L287.1 405 L287.4 405 L287.8 405 L288.3 405 L288.9 405.1 L289.5 405.1 L290.1 405.1 L290.9 405.2 L291.6 405.2 L292.5 405.3 L293.4 405.3 L294.3 405.4 L295.3 405.5 L296.3 405.6 L297.4 405.7 L298.5 405.8 L299.7 405.9 L300.9 406 L302.1 406.2 L303.4 406.3 L304.6 406.5 L306 406.7 L307.3 406.9 L308.6 407.1 L310 407.3 L311.3 407.6 L312.7 407.8 L314.1 408.1 L315.4 408.3 L316.8 408.6 L318.1 408.9 L319.5 409.2 L320.8 409.6 L322.1 409.9 L323.4 410.2 L324.7 410.6 L325.9 411 L327.1 411.4 L328.3 411.8 L329.5 412.2 L330.5 412.6 L331.6 413 L332.6 413.5 L333.6 413.9 L334.5 414.4 L335.4 414.8 L336.2 415.3 L336.9 415.8 L337.6 416.3 L338.2 416.8 L338.8 417.3 L339.3 417.8 L339.8 418.3 L340.1 418.8 L340.4 419.3 L340.7 419.9 L340.9 420.4 L341 420.9 L341 421.4 L341 422 L340.9 422.5 L340.7 423 L340.5 423.5 L340.2 424.1 L339.8 424.6 L339.4 425.1 L338.9 425.6 L338.3 426.1 L337.7 426.6 L337 427.1" fill="none" stroke="#eaded0" stroke-width="8" stroke-linejoin="round" stroke-linecap="round"/>
<path d="M291.1 173.3 L291.1 173.3 L291.2 173.3 L291.4 173.3 L291.6 173.3 L292 173.3 L292.3 173.3 L292.8 173.3 L293.3 173.4 L293.8 173.4 L294.4 173.4 L295.1 173.4 L295.9 173.5 L296.7 173.5 L297.5 173.6 L298.4 173.7 L299.4 173.7 L300.4 173.8 L301.4 173.9 L302.5 174 L303.7 174.1 L304.8 174.3 L306 174.4 L307.3 174.5 L308.5 174.7 L309.8 174.9 L311.1 175.1 L312.4 175.3 L313.8 175.5 L315.1 175.7 L316.5 175.9 L317.9 176.2 L319.2 176.4 L320.6 176.7 L321.9 177 L323.3 177.3 L324.6 177.6 L326 177.9 L327.3 178.3 L328.5 178.6 L329.8 179 L331 179.4 L332.2 179.8 L333.4 180.2 L334.5 180.6 L335.6 181 L336.6 181.4 L337.6 181.9 L338.6 182.3 L339.5 182.8 L340.3 183.3 L341.1 183.7 L341.8 184.2 L342.5 184.7 L343.1 185.2 L343.7 185.7 L344.2 186.2 L344.6 186.7 L345 187.2 L345.3 187.8 L345.5 188.3 L345.6 188.8 L345.7 189.3 L345.8 189.9 M290.4 206.4 L290.5 206.4 L290.6 206.4 L290.7 206.4 L291 206.4 L291.3 206.4 L291.6 206.4 L292.1 206.4 L292.6 206.5 L293.1 206.5 L293.8 206.5 L294.5 206.5 L295.2 206.6 L296 206.6 L296.8 206.7 L297.8 206.8 L298.7 206.8 L299.7 206.9 L300.8 207 L301.9 207.1 L303 207.2 L304.2 207.4 L305.4 207.5 L306.6 207.6 L307.8 207.8 L309.1 208 L310.4 208.2 L311.8 208.4 L313.1 208.6 L314.5 208.8 L315.8 209 L317.2 209.3 L318.5 209.5 L319.9 209.8 L321.3 210.1 L322.6 210.4 L324 210.7 L325.3 211 L326.6 211.4 L327.9 211.7 L329.1 212.1 L330.3 212.5 L331.5 212.9 L332.7 213.3 L333.8 213.7 L334.9 214.1 L336 214.5 L336.9 215 L337.9 215.4 L338.8 215.9 L339.6 216.4 L340.4 216.8 L341.2 217.3 L341.8 217.8 L342.5 218.3 L343 218.8 L343.5 219.3 L343.9 219.8 L344.3 220.3 L344.6 220.9 L344.8 221.4 L345 221.9 L345.1 222.4 L345.1 223 M289.7 239.5 L289.8 239.5 L289.9 239.5 L290 239.5 L290.3 239.5 L290.6 239.5 L291 239.5 L291.4 239.5 L291.9 239.6 L292.5 239.6 L293.1 239.6 L293.8 239.6 L294.5 239.7 L295.3 239.7 L296.2 239.8 L297.1 239.9 L298 239.9 L299 240 L300.1 240.1 L301.2 240.2 L302.3 240.3 L303.5 240.5 L304.7 240.6 L305.9 240.7 L307.2 240.9 L308.5 241.1 L309.8 241.3 L311.1 241.5 L312.4 241.7 L313.8 241.9 L315.1 242.1 L316.5 242.4 L317.9 242.6 L319.2 242.9 L320.6 243.2 L321.9 243.5 L323.3 243.8 L324.6 244.1 L325.9 244.5 L327.2 244.8 L328.4 245.2 L329.7 245.6 L330.9 246 L332 246.4 L333.1 246.8 L334.2 247.2 L335.3 247.6 L336.3 248.1 L337.2 248.5 L338.1 249 L339 249.5 L339.8 249.9 L340.5 250.4 L341.2 250.9 L341.8 251.4 L342.3 251.9 L342.8 252.4 L343.2 252.9 L343.6 253.4 L343.9 254 L344.1 254.5 L344.3 255 L344.4 255.5 L344.4 256.1 M289.1 272.6 L289.1 272.6 L289.2 272.6 L289.4 272.6 L289.6 272.6 L289.9 272.6 L290.3 272.6 L290.7 272.6 L291.2 272.7 L291.8 272.7 L292.4 272.7 L293.1 272.7 L293.8 272.8 L294.6 272.8 L295.5 272.9 L296.4 273 L297.4 273 L298.4 273.1 L299.4 273.2 L300.5 273.3 L301.6 273.4 L302.8 273.6 L304 273.7 L305.2 273.8 L306.5 274 L307.8 274.2 L309.1 274.4 L310.4 274.6 L311.7 274.8 L313.1 275 L314.5 275.2 L315.8 275.5 L317.2 275.7 L318.5 276 L319.9 276.3 L321.3 276.6 L322.6 276.9 L323.9 277.2 L325.2 277.6 L326.5 277.9 L327.8 278.3 L329 278.7 L330.2 279.1 L331.3 279.5 L332.5 279.9 L333.6 280.3 L334.6 280.7 L335.6 281.2 L336.5 281.6 L337.4 282.1 L338.3 282.6 L339.1 283 L339.8 283.5 L340.5 284 L341.1 284.5 L341.7 285 L342.1 285.5 L342.6 286 L342.9 286.5 L343.2 287.1 L343.5 287.6 L343.6 288.1 L343.7 288.6 L343.7 289.2 M288.4 305.7 L288.4 305.7 L288.5 305.7 L288.7 305.7 L288.9 305.7 L289.2 305.7 L289.6 305.7 L290 305.7 L290.5 305.8 L291.1 305.8 L291.7 305.8 L292.4 305.8 L293.2 305.9 L294 305.9 L294.8 306 L295.7 306.1 L296.7 306.1 L297.7 306.2 L298.7 306.3 L299.8 306.4 L300.9 306.5 L302.1 306.7 L303.3 306.8 L304.5 306.9 L305.8 307.1 L307.1 307.3 L308.4 307.5 L309.7 307.7 L311.1 307.9 L312.4 308.1 L313.8 308.3 L315.1 308.6 L316.5 308.8 L317.9 309.1 L319.2 309.4 L320.6 309.7 L321.9 310 L323.2 310.3 L324.5 310.7 L325.8 311 L327.1 311.4 L328.3 311.8 L329.5 312.2 L330.7 312.6 L331.8 313 L332.9 313.4 L333.9 313.8 L334.9 314.3 L335.9 314.7 L336.8 315.2 L337.6 315.7 L338.4 316.1 L339.1 316.6 L339.8 317.1 L340.4 317.6 L341 318.1 L341.5 318.6 L341.9 319.1 L342.2 319.6 L342.5 320.2 L342.8 320.7 L342.9 321.2 L343 321.7 L343 322.2 M287.7 338.8 L287.7 338.8 L287.8 338.8 L288 338.8 L288.3 338.8 L288.6 338.8 L288.9 338.8 L289.4 338.8 L289.9 338.9 L290.4 338.9 L291.1 338.9 L291.7 338.9 L292.5 339 L293.3 339 L294.1 339.1 L295 339.2 L296 339.2 L297 339.3 L298 339.4 L299.1 339.5 L300.3 339.6 L301.4 339.8 L302.6 339.9 L303.9 340 L305.1 340.2 L306.4 340.4 L307.7 340.6 L309 340.8 L310.4 341 L311.7 341.2 L313.1 341.4 L314.5 341.7 L315.8 341.9 L317.2 342.2 L318.6 342.5 L319.9 342.8 L321.2 343.1 L322.6 343.4 L323.9 343.8 L325.1 344.1 L326.4 344.5 L327.6 344.9 L328.8 345.3 L330 345.7 L331.1 346.1 L332.2 346.5 L333.2 346.9 L334.2 347.4 L335.2 347.8 L336.1 348.3 L336.9 348.8 L337.7 349.2 L338.4 349.7 L339.1 350.2 L339.7 350.7 L340.3 351.2 L340.8 351.7 L341.2 352.2 L341.6 352.7 L341.9 353.3 L342.1 353.8 L342.3 354.3 L342.3 354.8 L342.4 355.3 M287 371.9 L287.1 371.9 L287.2 371.9 L287.3 371.9 L287.6 371.9 L287.9 371.9 L288.2 371.9 L288.7 371.9 L289.2 372 L289.8 372 L290.4 372 L291.1 372 L291.8 372.1 L292.6 372.1 L293.5 372.2 L294.4 372.3 L295.3 372.3 L296.3 372.4 L297.4 372.5 L298.5 372.6 L299.6 372.7 L300.8 372.9 L302 373 L303.2 373.1 L304.5 373.3 L305.7 373.5 L307 373.7 L308.4 373.9 L309.7 374.1 L311.1 374.3 L312.4 374.5 L313.8 374.8 L315.1 375 L316.5 375.3 L317.9 375.6 L319.2 375.9 L320.6 376.2 L321.9 376.5 L323.2 376.9 L324.5 377.2 L325.7 377.6 L326.9 378 L328.1 378.4 L329.3 378.8 L330.4 379.2 L331.5 379.6 L332.6 380 L333.6 380.5 L334.5 380.9 L335.4 381.4 L336.2 381.9 L337 382.3 L337.8 382.8 L338.4 383.3 L339.1 383.8 L339.6 384.3 L340.1 384.8 L340.5 385.3 L340.9 385.8 L341.2 386.4 L341.4 386.9 L341.6 387.4 L341.7 387.9 L341.7 388.5 M286.4 405 L286.4 405 L286.5 405 L286.7 405 L286.9 405 L287.2 405 L287.6 405 L288 405 L288.5 405.1 L289.1 405.1 L289.7 405.1 L290.4 405.1 L291.1 405.2 L291.9 405.2 L292.8 405.3 L293.7 405.4 L294.6 405.4 L295.6 405.5 L296.7 405.6 L297.8 405.7 L298.9 405.8 L300.1 406 L301.3 406.1 L302.5 406.2 L303.8 406.4 L305.1 406.6 L306.4 406.8 L307.7 407 L309 407.2 L310.4 407.4 L311.7 407.6 L313.1 407.9 L314.5 408.1 L315.8 408.4 L317.2 408.7 L318.5 409 L319.9 409.3 L321.2 409.6 L322.5 410 L323.8 410.3 L325 410.7 L326.3 411.1 L327.5 411.5 L328.6 411.9 L329.8 412.3 L330.8 412.7 L331.9 413.1 L332.9 413.6 L333.8 414 L334.7 414.5 L335.6 415 L336.4 415.4 L337.1 415.9 L337.8 416.4 L338.4 416.9 L338.9 417.4 L339.4 417.9 L339.9 418.4 L340.2 418.9 L340.5 419.5 L340.7 420 L340.9 420.5 L341 421 L341 421.5" fill="none" stroke="#9c8a78" stroke-width="0.8" stroke-dasharray="1.6 1.6"/>
<path d="M338.7 163.1 L338 163.6 L337.2 164 L336.3 164.5 L335.4 164.9 L334.4 165.3 L333.4 165.8 L332.4 166.2 L331.4 166.6 L330.3 167 L329.1 167.4 L328 167.7 L326.8 168.1 L325.6 168.4 L324.4 168.8 L323.2 169.1 L321.9 169.4 L320.7 169.7 L319.4 170 L318.1 170.2 L316.9 170.5 L315.6 170.7 L314.3 171 L313.1 171.2 L311.9 171.4 L310.6 171.6 L309.4 171.8 L308.3 171.9 L307.1 172.1 L306 172.2 L304.9 172.4 L303.8 172.5 L302.8 172.6 L301.8 172.7 L300.8 172.8 L299.9 172.9 L299 173 L298.2 173 L297.4 173.1 L296.7 173.1 L296 173.2 L295.4 173.2 L294.8 173.2 L294.3 173.2 L293.8 173.3 L293.4 173.3 L293.1 173.3 L292.8 173.3 L292.6 173.3 L292.4 173.3 L292.3 173.3 L292.3 173.3 M292.3 173.3 L292.3 173.3 L292.4 173.3 L292.6 173.3 L292.8 173.3 L293.1 173.3 L293.4 173.3 L293.8 173.3 L294.3 173.4 L294.8 173.4 L295.4 173.4 L296 173.4 L296.7 173.5 L297.5 173.5 L298.3 173.6 L299.1 173.7 L300 173.7 L300.9 173.8 L301.9 173.9 L302.9 174 L303.9 174.1 L305 174.3 L306.1 174.4 L307.3 174.5 L308.5 174.7 L309.6 174.9 L310.9 175.1 L312.1 175.3 L313.3 175.5 L314.6 175.7 L315.8 175.9 L317.1 176.2 L318.4 176.4 L319.6 176.7 L320.9 177 L322.1 177.3 L323.4 177.6 L324.6 177.9 L325.8 178.3 L327 178.6 L328.2 179 L329.3 179.4 L330.4 179.8 L331.5 180.2 L332.5 180.6 L333.5 181 L334.5 181.4 L335.4 181.9 L336.3 182.3 L337.1 182.8 L337.9 183.3 L338.7 183.7 L339.3 184.2 L340 184.7 L340.5 185.2 L341 185.7 L341.5 186.2 L341.9 186.7 L342.2 187.2 L342.5 187.8 L342.7 188.3 L342.9 188.8 L342.9 189.3 L343 189.9 M343 189.9 L342.9 190.4 L342.8 190.9 L342.6 191.4 L342.4 191.9 L342.1 192.5 L341.8 193 L341.3 193.5 L340.9 194 L340.3 194.5 L339.7 195 L339.1 195.5 L338.4 196 L337.7 196.4 L336.9 196.9 L336 197.4 L335.1 197.8 L334.2 198.3 L333.2 198.7 L332.2 199.1 L331.1 199.5 L330 199.9 L328.9 200.3 L327.7 200.7 L326.5 201.1 L325.3 201.4 L324.1 201.8 L322.9 202.1 L321.6 202.4 L320.4 202.7 L319.1 203 L317.8 203.3 L316.5 203.5 L315.3 203.8 L314 204 L312.7 204.2 L311.5 204.4 L310.3 204.6 L309 204.8 L307.8 205 L306.7 205.2 L305.5 205.3 L304.4 205.4 L303.3 205.6 L302.3 205.7 L301.2 205.8 L300.3 205.9 L299.3 206 L298.4 206 L297.6 206.1 L296.8 206.2 L296.1 206.2 L295.4 206.3 L294.7 206.3 L294.1 206.3 L293.6 206.3 L293.2 206.4 L292.8 206.4 L292.4 206.4 L292.1 206.4 L291.9 206.4 L291.7 206.4 L291.7 206.4 L291.6 206.4 M291.6 206.4 L291.7 206.4 L291.7 206.4 L291.9 206.4 L292.1 206.4 L292.4 206.4 L292.8 206.4 L293.2 206.4 L293.6 206.5 L294.1 206.5 L294.7 206.5 L295.4 206.5 L296 206.6 L296.8 206.6 L297.6 206.7 L298.4 206.8 L299.3 206.8 L300.2 206.9 L301.2 207 L302.2 207.1 L303.3 207.2 L304.4 207.4 L305.5 207.5 L306.6 207.6 L307.8 207.8 L309 208 L310.2 208.2 L311.4 208.4 L312.6 208.6 L313.9 208.8 L315.2 209 L316.4 209.3 L317.7 209.5 L319 209.8 L320.2 210.1 L321.5 210.4 L322.7 210.7 L323.9 211 L325.1 211.4 L326.3 211.7 L327.5 212.1 L328.6 212.5 L329.7 212.9 L330.8 213.3 L331.9 213.7 L332.9 214.1 L333.8 214.5 L334.8 215 L335.6 215.4 L336.5 215.9 L337.2 216.4 L338 216.8 L338.7 217.3 L339.3 217.8 L339.9 218.3 L340.4 218.8 L340.8 219.3 L341.2 219.8 L341.5 220.3 L341.8 220.9 L342 221.4 L342.2 221.9 L342.3 222.4 L342.3 223 M342.3 223 L342.2 223.5 L342.1 224 L342 224.5 L341.7 225 L341.4 225.6 L341.1 226.1 L340.7 226.6 L340.2 227.1 L339.7 227.6 L339.1 228.1 L338.4 228.6 L337.7 229.1 L337 229.5 L336.2 230 L335.3 230.5 L334.4 230.9 L333.5 231.4 L332.5 231.8 L331.5 232.2 L330.4 232.6 L329.3 233 L328.2 233.4 L327 233.8 L325.9 234.2 L324.7 234.5 L323.4 234.9 L322.2 235.2 L321 235.5 L319.7 235.8 L318.4 236.1 L317.1 236.4 L315.9 236.6 L314.6 236.9 L313.3 237.1 L312.1 237.3 L310.8 237.5 L309.6 237.7 L308.4 237.9 L307.2 238.1 L306 238.3 L304.8 238.4 L303.7 238.5 L302.6 238.7 L301.6 238.8 L300.6 238.9 L299.6 239 L298.6 239.1 L297.8 239.1 L296.9 239.2 L296.1 239.3 L295.4 239.3 L294.7 239.4 L294.1 239.4 L293.5 239.4 L292.9 239.4 L292.5 239.5 L292.1 239.5 L291.7 239.5 L291.4 239.5 L291.2 239.5 L291.1 239.5 L291 239.5 L290.9 239.5 M290.9 239.5 L291 239.5 L291.1 239.5 L291.2 239.5 L291.4 239.5 L291.7 239.5 L292.1 239.5 L292.5 239.5 L292.9 239.6 L293.5 239.6 L294 239.6 L294.7 239.6 L295.4 239.7 L296.1 239.7 L296.9 239.8 L297.7 239.9 L298.6 239.9 L299.6 240 L300.5 240.1 L301.5 240.2 L302.6 240.3 L303.7 240.5 L304.8 240.6 L305.9 240.7 L307.1 240.9 L308.3 241.1 L309.5 241.3 L310.7 241.5 L312 241.7 L313.2 241.9 L314.5 242.1 L315.7 242.4 L317 242.6 L318.3 242.9 L319.5 243.2 L320.8 243.5 L322 243.8 L323.3 244.1 L324.5 244.5 L325.6 244.8 L326.8 245.2 L328 245.6 L329.1 246 L330.1 246.4 L331.2 246.8 L332.2 247.2 L333.1 247.6 L334.1 248.1 L335 248.5 L335.8 249 L336.6 249.5 L337.3 249.9 L338 250.4 L338.6 250.9 L339.2 251.4 L339.7 251.9 L340.1 252.4 L340.5 252.9 L340.9 253.4 L341.1 254 L341.4 254.5 L341.5 255 L341.6 255.5 L341.6 256.1 M341.6 256.1 L341.6 256.6 L341.5 257.1 L341.3 257.6 L341.1 258.1 L340.8 258.7 L340.4 259.2 L340 259.7 L339.5 260.2 L339 260.7 L338.4 261.2 L337.7 261.7 L337 262.2 L336.3 262.6 L335.5 263.1 L334.6 263.6 L333.7 264 L332.8 264.5 L331.8 264.9 L330.8 265.3 L329.7 265.7 L328.6 266.1 L327.5 266.5 L326.4 266.9 L325.2 267.3 L324 267.6 L322.8 268 L321.5 268.3 L320.3 268.6 L319 268.9 L317.7 269.2 L316.5 269.5 L315.2 269.7 L313.9 270 L312.6 270.2 L311.4 270.4 L310.1 270.6 L308.9 270.8 L307.7 271 L306.5 271.2 L305.3 271.4 L304.2 271.5 L303 271.6 L301.9 271.8 L300.9 271.9 L299.9 272 L298.9 272.1 L298 272.2 L297.1 272.2 L296.2 272.3 L295.4 272.4 L294.7 272.4 L294 272.5 L293.4 272.5 L292.8 272.5 L292.3 272.5 L291.8 272.6 L291.4 272.6 L291.1 272.6 L290.8 272.6 L290.5 272.6 L290.4 272.6 L290.3 272.6 L290.3 272.6 M290.3 272.6 L290.3 272.6 L290.4 272.6 L290.5 272.6 L290.8 272.6 L291.1 272.6 L291.4 272.6 L291.8 272.6 L292.3 272.7 L292.8 272.7 L293.4 272.7 L294 272.7 L294.7 272.8 L295.4 272.8 L296.2 272.9 L297.1 273 L298 273 L298.9 273.1 L299.9 273.2 L300.9 273.3 L301.9 273.4 L303 273.6 L304.1 273.7 L305.3 273.8 L306.4 274 L307.6 274.2 L308.8 274.4 L310 274.6 L311.3 274.8 L312.5 275 L313.8 275.2 L315.1 275.5 L316.3 275.7 L317.6 276 L318.9 276.3 L320.1 276.6 L321.4 276.9 L322.6 277.2 L323.8 277.6 L325 277.9 L326.1 278.3 L327.3 278.7 L328.4 279.1 L329.5 279.5 L330.5 279.9 L331.5 280.3 L332.5 280.7 L333.4 281.2 L334.3 281.6 L335.1 282.1 L335.9 282.6 L336.6 283 L337.3 283.5 L337.9 284 L338.5 284.5 L339 285 L339.5 285.5 L339.9 286 L340.2 286.5 L340.5 287.1 L340.7 287.6 L340.8 288.1 L340.9 288.6 L340.9 289.2 M340.9 289.2 L340.9 289.7 L340.8 290.2 L340.6 290.7 L340.4 291.2 L340.1 291.8 L339.7 292.3 L339.3 292.8 L338.8 293.3 L338.3 293.8 L337.7 294.3 L337.1 294.8 L336.4 295.3 L335.6 295.7 L334.8 296.2 L334 296.7 L333.1 297.1 L332.1 297.6 L331.1 298 L330.1 298.4 L329.1 298.8 L328 299.2 L326.8 299.6 L325.7 300 L324.5 300.4 L323.3 300.7 L322.1 301.1 L320.8 301.4 L319.6 301.7 L318.3 302 L317.1 302.3 L315.8 302.6 L314.5 302.8 L313.2 303.1 L312 303.3 L310.7 303.5 L309.5 303.7 L308.2 303.9 L307 304.1 L305.8 304.3 L304.6 304.5 L303.5 304.6 L302.4 304.7 L301.3 304.9 L300.2 305 L299.2 305.1 L298.2 305.2 L297.3 305.3 L296.4 305.3 L295.6 305.4 L294.8 305.5 L294 305.5 L293.3 305.6 L292.7 305.6 L292.1 305.6 L291.6 305.6 L291.1 305.7 L290.7 305.7 L290.4 305.7 L290.1 305.7 L289.9 305.7 L289.7 305.7 L289.6 305.7 L289.6 305.7 M289.6 305.7 L289.6 305.7 L289.7 305.7 L289.9 305.7 L290.1 305.7 L290.4 305.7 L290.7 305.7 L291.1 305.7 L291.6 305.8 L292.1 305.8 L292.7 305.8 L293.3 305.8 L294 305.9 L294.8 305.9 L295.5 306 L296.4 306.1 L297.3 306.1 L298.2 306.2 L299.2 306.3 L300.2 306.4 L301.2 306.5 L302.3 306.7 L303.4 306.8 L304.6 306.9 L305.7 307.1 L306.9 307.3 L308.1 307.5 L309.4 307.7 L310.6 307.9 L311.9 308.1 L313.1 308.3 L314.4 308.6 L315.7 308.8 L316.9 309.1 L318.2 309.4 L319.4 309.7 L320.7 310 L321.9 310.3 L323.1 310.7 L324.3 311 L325.5 311.4 L326.6 311.8 L327.7 312.2 L328.8 312.6 L329.8 313 L330.8 313.4 L331.8 313.8 L332.7 314.3 L333.6 314.7 L334.4 315.2 L335.2 315.7 L335.9 316.1 L336.6 316.6 L337.2 317.1 L337.8 317.6 L338.3 318.1 L338.8 318.6 L339.2 319.1 L339.5 319.6 L339.8 320.2 L340 320.7 L340.1 321.2 L340.2 321.7 L340.2 322.2 M340.2 322.2 L340.2 322.8 L340.1 323.3 L339.9 323.8 L339.7 324.3 L339.4 324.9 L339 325.4 L338.6 325.9 L338.2 326.4 L337.6 326.9 L337 327.4 L336.4 327.9 L335.7 328.4 L334.9 328.8 L334.1 329.3 L333.3 329.8 L332.4 330.2 L331.4 330.7 L330.5 331.1 L329.4 331.5 L328.4 331.9 L327.3 332.3 L326.2 332.7 L325 333.1 L323.8 333.5 L322.6 333.8 L321.4 334.2 L320.2 334.5 L318.9 334.8 L317.7 335.1 L316.4 335.4 L315.1 335.7 L313.8 335.9 L312.6 336.2 L311.3 336.4 L310 336.6 L308.8 336.8 L307.5 337 L306.3 337.2 L305.1 337.4 L303.9 337.6 L302.8 337.7 L301.7 337.8 L300.6 338 L299.5 338.1 L298.5 338.2 L297.5 338.3 L296.6 338.4 L295.7 338.4 L294.9 338.5 L294.1 338.6 L293.3 338.6 L292.7 338.7 L292 338.7 L291.4 338.7 L290.9 338.7 L290.4 338.8 L290 338.8 L289.7 338.8 L289.4 338.8 L289.2 338.8 L289 338.8 L288.9 338.8 L288.9 338.8 M288.9 338.8 L288.9 338.8 L289 338.8 L289.2 338.8 L289.4 338.8 L289.7 338.8 L290 338.8 L290.4 338.8 L290.9 338.9 L291.4 338.9 L292 338.9 L292.6 338.9 L293.3 339 L294.1 339 L294.9 339.1 L295.7 339.2 L296.6 339.2 L297.5 339.3 L298.5 339.4 L299.5 339.5 L300.6 339.6 L301.6 339.8 L302.8 339.9 L303.9 340 L305.1 340.2 L306.3 340.4 L307.5 340.6 L308.7 340.8 L309.9 341 L311.2 341.2 L312.4 341.4 L313.7 341.7 L315 341.9 L316.2 342.2 L317.5 342.5 L318.8 342.8 L320 343.1 L321.2 343.4 L322.4 343.8 L323.6 344.1 L324.8 344.5 L325.9 344.9 L327 345.3 L328.1 345.7 L329.1 346.1 L330.1 346.5 L331.1 346.9 L332 347.4 L332.9 347.8 L333.7 348.3 L334.5 348.8 L335.3 349.2 L335.9 349.7 L336.6 350.2 L337.1 350.7 L337.7 351.2 L338.1 351.7 L338.5 352.2 L338.8 352.7 L339.1 353.3 L339.3 353.8 L339.5 354.3 L339.5 354.8 L339.6 355.3 M339.6 355.3 L339.5 355.9 L339.4 356.4 L339.3 356.9 L339 357.4 L338.7 358 L338.4 358.5 L338 359 L337.5 359.5 L336.9 360 L336.4 360.5 L335.7 361 L335 361.5 L334.3 361.9 L333.5 362.4 L332.6 362.9 L331.7 363.3 L330.8 363.8 L329.8 364.2 L328.8 364.6 L327.7 365 L326.6 365.4 L325.5 365.8 L324.3 366.2 L323.2 366.6 L322 366.9 L320.7 367.3 L319.5 367.6 L318.2 367.9 L317 368.2 L315.7 368.5 L314.4 368.8 L313.2 369 L311.9 369.3 L310.6 369.5 L309.3 369.7 L308.1 369.9 L306.9 370.1 L305.6 370.3 L304.4 370.5 L303.3 370.7 L302.1 370.8 L301 370.9 L299.9 371.1 L298.9 371.2 L297.8 371.3 L296.9 371.4 L295.9 371.5 L295 371.5 L294.2 371.6 L293.4 371.7 L292.7 371.7 L292 371.8 L291.3 371.8 L290.8 371.8 L290.2 371.8 L289.8 371.9 L289.4 371.9 L289 371.9 L288.7 371.9 L288.5 371.9 L288.4 371.9 L288.3 371.9 L288.2 371.9 M288.2 371.9 L288.3 371.9 L288.4 371.9 L288.5 371.9 L288.7 371.9 L289 371.9 L289.4 371.9 L289.8 371.9 L290.2 372 L290.8 372 L291.3 372 L292 372 L292.7 372.1 L293.4 372.1 L294.2 372.2 L295 372.3 L295.9 372.3 L296.8 372.4 L297.8 372.5 L298.8 372.6 L299.9 372.7 L301 372.9 L302.1 373 L303.2 373.1 L304.4 373.3 L305.6 373.5 L306.8 373.7 L308 373.9 L309.3 374.1 L310.5 374.3 L311.8 374.5 L313 374.8 L314.3 375 L315.6 375.3 L316.8 375.6 L318.1 375.9 L319.3 376.2 L320.5 376.5 L321.7 376.9 L322.9 377.2 L324.1 377.6 L325.2 378 L326.3 378.4 L327.4 378.8 L328.5 379.2 L329.5 379.6 L330.4 380 L331.4 380.5 L332.2 380.9 L333.1 381.4 L333.9 381.9 L334.6 382.3 L335.3 382.8 L335.9 383.3 L336.5 383.8 L337 384.3 L337.4 384.8 L337.8 385.3 L338.2 385.8 L338.4 386.4 L338.6 386.9 L338.8 387.4 L338.9 387.9 L338.9 388.5 M338.9 388.5 L338.8 389 L338.7 389.5 L338.6 390 L338.3 390.5 L338 391.1 L337.7 391.6 L337.3 392.1 L336.8 392.6 L336.3 393.1 L335.7 393.6 L335 394.1 L334.3 394.6 L333.6 395 L332.8 395.5 L331.9 396 L331 396.4 L330.1 396.9 L329.1 397.3 L328.1 397.7 L327 398.1 L325.9 398.5 L324.8 398.9 L323.7 399.3 L322.5 399.7 L321.3 400 L320.1 400.4 L318.8 400.7 L317.6 401 L316.3 401.3 L315 401.6 L313.8 401.9 L312.5 402.1 L311.2 402.4 L309.9 402.6 L308.7 402.8 L307.4 403 L306.2 403.2 L305 403.4 L303.8 403.6 L302.6 403.8 L301.4 403.9 L300.3 404 L299.2 404.2 L298.2 404.3 L297.2 404.4 L296.2 404.5 L295.3 404.6 L294.4 404.6 L293.5 404.7 L292.7 404.8 L292 404.8 L291.3 404.9 L290.7 404.9 L290.1 404.9 L289.6 404.9 L289.1 405 L288.7 405 L288.3 405 L288.1 405 L287.8 405 L287.7 405 L287.6 405 L287.6 405 M287.6 405 L287.6 405 L287.7 405 L287.8 405 L288.1 405 L288.3 405 L288.7 405 L289.1 405 L289.6 405.1 L290.1 405.1 L290.7 405.1 L291.3 405.1 L292 405.2 L292.7 405.2 L293.5 405.3 L294.4 405.4 L295.2 405.4 L296.2 405.5 L297.1 405.6 L298.2 405.7 L299.2 405.8 L300.3 406 L301.4 406.1 L302.5 406.2 L303.7 406.4 L304.9 406.6 L306.1 406.8 L307.3 407 L308.6 407.2 L309.8 407.4 L311.1 407.6 L312.4 407.9 L313.6 408.1 L314.9 408.4 L316.1 408.7 L317.4 409 L318.6 409.3 L319.9 409.6 L321.1 410 L322.3 410.3 L323.4 410.7 L324.6 411.1 L325.7 411.5 L326.7 411.9 L327.8 412.3 L328.8 412.7 L329.8 413.1 L330.7 413.6 L331.6 414 L332.4 414.5 L333.2 415 L333.9 415.4 L334.6 415.9 L335.2 416.4 L335.8 416.9 L336.3 417.4 L336.7 417.9 L337.1 418.4 L337.5 418.9 L337.7 419.5 L338 420 L338.1 420.5 L338.2 421 L338.2 421.5 M338.2 421.5 L338.2 422.1 L338.1 422.6 L337.9 423.1 L337.7 423.6 L337.4 424.1 L337.1 424.6 L336.7 425.1 L336.2 425.6 L335.7 426.1 L335.1 426.6 L334.5 427.1" fill="none" stroke="#725f4c" stroke-width="0.95"/>
<!-- cylinder lines -->
<path d="M295.1 163 L292.4 424 M303.2 167 L300.6 430 M333 167 L330 430 M341.3 165 L337.7 428" fill="none" stroke="#5a5a5a" stroke-width="0.85"/>
<ellipse cx="318.3" cy="161.3" rx="27" ry="6" fill="none" stroke="#404040" stroke-width="1" transform="rotate(2 318.3 161.3)"/>
<ellipse cx="341.3" cy="164.6" rx="3.6" ry="4" fill="none" stroke="#505050" stroke-width="0.9"/>
<ellipse cx="337.6" cy="429" rx="3.8" ry="4.2" fill="#dcd8d0" stroke="#484848" stroke-width="0.9"/>

<!-- tubes -->
<g opacity="0.92"><path d="M460.9 272.8 L459.9 273.5 L458.8 274.1 L457.7 274.8 L456.6 275.4 L455.3 276 L454.1 276.6 L452.8 277.2 L451.4 277.8 L450.1 278.4 L448.6 278.9 L447.2 279.4 L445.7 279.9 L444.2 280.4 L442.7 280.9 L441.2 281.4 L439.7 281.8 L438.1 282.2 L436.6 282.6 L435 283 L433.5 283.3 L431.9 283.7 L430.4 284 L428.9 284.3 L427.4 284.6 L425.9 284.8 L424.4 285.1 L423 285.3 L421.6 285.5 L420.3 285.7 L418.9 285.9 L417.7 286.1 L416.4 286.2 L415.3 286.4 L414.1 286.5 L413.1 286.6 L412 286.7 L411.1 286.8 L410.2 286.8 L409.3 286.9 L408.6 286.9 L407.9 287 L407.2 287 L406.7 287 L406.2 287.1 L405.8 287.1 L405.4 287.1 L405.1 287.1 L405 287.1 L404.8 287.1 L404.8 286.9 L404.8 286.9 L404.8 284.3 L404.9 284.2 L405.1 284.2 L405.3 284.1 L405.7 284 L406.1 283.9 L406.5 283.8 L407.1 283.7 L407.7 283.5 L408.3 283.4 L409.1 283.2 L409.9 283 L410.7 282.8 L411.7 282.6 L412.6 282.4 L413.7 282.1 L414.8 281.9 L415.9 281.6 L417.1 281.3 L418.3 281 L419.6 280.7 L420.8 280.3 L422.2 280 L423.5 279.6 L424.9 279.2 L426.3 278.8 L427.7 278.4 L429.2 278 L430.6 277.5 L432 277 L433.5 276.5 L434.9 276 L436.4 275.5 L437.8 275 L439.2 274.5 L440.6 273.9 L442 273.3 L443.3 272.8 L444.6 272.2 L445.9 271.6 L447.1 271 L448.3 270.4 L449.5 269.7 L450.6 269.1 L451.6 268.5 L452.6 267.9 L453.5 267.3 L454.3 266.7 L455.1 266.1 L455.8 265.5 Z M404.8 286.9 L404.8 286.7 L405 286.7 L405.2 286.7 L405.4 286.7 L405.8 286.7 L406.2 286.7 L406.7 286.8 L407.3 286.8 L407.9 286.8 L408.6 286.9 L409.4 286.9 L410.3 287 L411.2 287 L412.2 287.1 L413.2 287.2 L414.3 287.3 L415.4 287.5 L416.6 287.6 L417.9 287.7 L419.2 287.9 L420.5 288.1 L421.9 288.3 L423.3 288.5 L424.8 288.8 L426.2 289 L427.7 289.3 L429.3 289.6 L430.8 289.9 L432.3 290.2 L433.9 290.6 L435.5 290.9 L437 291.3 L438.6 291.7 L440.2 292.1 L441.7 292.6 L443.2 293.1 L444.8 293.5 L446.3 294 L447.7 294.6 L449.2 295.1 L450.6 295.6 L452 296.2 L453.3 296.8 L454.6 297.4 L455.9 298 L457.1 298.7 L458.2 299.3 L459.3 300 L460.4 300.7 L461.3 301.4 L462.3 302.1 L463.1 302.8 L463.9 303.5 L464.6 304.2 L465.3 305 L465.9 305.7 L466.4 306.5 L466.8 307.3 L467.2 308 L467.4 308.8 L467.6 309.6 L467.8 310.4 L467.8 311.2 L467.8 312 L467.6 312.8 L467.4 313.6 L467.2 314.4 L466.8 315.1 L466.4 315.9 L465.9 316.7 L465.3 317.4 L464.6 318.2 L463.9 318.9 L463.1 319.6 L462.3 320.3 L461.3 321 L460.4 321.7 L459.3 322.4 L458.2 323.1 L457.1 323.7 L455.9 324.4 L454.6 325 L453.3 325.6 L452 326.2 L450.6 326.8 L449.2 327.3 L447.7 327.8 L446.3 328.4 L444.8 328.9 L443.2 329.3 L441.7 329.8 L440.2 330.3 L438.6 330.7 L437 331.1 L435.5 331.5 L433.9 331.8 L432.3 332.2 L430.8 332.5 L429.3 332.8 L427.7 333.1 L426.2 333.4 L424.8 333.6 L423.3 333.9 L421.9 334.1 L420.5 334.3 L419.2 334.5 L417.9 334.7 L416.6 334.8 L415.4 334.9 L414.3 335.1 L413.2 335.2 L412.2 335.3 L411.2 335.4 L410.3 335.4 L409.4 335.5 L408.6 335.5 L407.9 335.6 L407.3 335.6 L406.7 335.6 L406.2 335.7 L405.8 335.7 L405.4 335.7 L405.2 335.7 L405 335.7 L404.8 335.7 L404.8 335.5 L404.8 335.5 L404.8 332.9 L404.9 332.8 L405.1 332.8 L405.4 332.7 L405.7 332.6 L406.1 332.5 L406.6 332.4 L407.1 332.2 L407.7 332.1 L408.4 331.9 L409.2 331.8 L410 331.6 L410.9 331.4 L411.8 331.2 L412.8 330.9 L413.8 330.7 L414.9 330.4 L416.1 330.1 L417.3 329.9 L418.5 329.5 L419.8 329.2 L421.1 328.9 L422.5 328.5 L423.8 328.1 L425.2 327.7 L426.7 327.3 L428.1 326.9 L429.5 326.4 L431 326 L432.4 325.5 L433.9 325 L435.4 324.5 L436.8 324 L438.3 323.4 L439.7 322.9 L441.1 322.3 L442.4 321.7 L443.8 321.1 L445.1 320.6 L446.4 319.9 L447.6 319.3 L448.8 318.7 L449.9 318.1 L451 317.5 L452 316.9 L453 316.2 L453.9 315.6 L454.7 315 L455.4 314.4 L456.1 313.9 L456.7 313.3 L457.2 312.8 L457.6 312.4 L457.9 311.9 L458.2 311.6 L458.3 311.3 L458.5 311.1 L458.5 310.9 L458.5 310.8 L458.5 310.8 L458.4 310.9 L458.4 311 L458.4 311.2 L458.4 311.4 L458.4 311.5 L458.5 311.6 L458.5 311.6 L458.5 311.5 L458.5 311.3 L458.3 311.1 L458.2 310.8 L457.9 310.5 L457.6 310 L457.2 309.6 L456.7 309.1 L456.1 308.5 L455.4 308 L454.7 307.4 L453.9 306.8 L453 306.2 L452 305.5 L451 304.9 L449.9 304.3 L448.8 303.7 L447.6 303.1 L446.4 302.5 L445.1 301.8 L443.8 301.3 L442.4 300.7 L441.1 300.1 L439.7 299.5 L438.3 299 L436.8 298.4 L435.4 297.9 L433.9 297.4 L432.4 296.9 L431 296.4 L429.5 296 L428.1 295.5 L426.7 295.1 L425.2 294.7 L423.8 294.3 L422.5 293.9 L421.1 293.5 L419.8 293.2 L418.5 292.9 L417.3 292.5 L416.1 292.3 L414.9 292 L413.8 291.7 L412.8 291.5 L411.8 291.2 L410.9 291 L410 290.8 L409.2 290.6 L408.4 290.5 L407.7 290.3 L407.1 290.2 L406.6 290 L406.1 289.9 L405.7 289.8 L405.4 289.7 L405.1 289.6 L404.9 289.6 L404.8 289.5 L404.8 286.9 Z M404.8 335.5 L404.8 335.3 L405 335.3 L405.2 335.3 L405.4 335.3 L405.8 335.3 L406.2 335.3 L406.7 335.4 L407.3 335.4 L407.9 335.4 L408.6 335.5 L409.4 335.5 L410.3 335.6 L411.2 335.6 L412.2 335.7 L413.2 335.8 L414.3 335.9 L415.4 336.1 L416.6 336.2 L417.9 336.3 L419.2 336.5 L420.5 336.7 L421.9 336.9 L423.3 337.1 L424.8 337.4 L426.2 337.6 L427.7 337.9 L429.3 338.2 L430.8 338.5 L432.3 338.8 L433.9 339.2 L435.5 339.5 L437 339.9 L438.6 340.3 L440.2 340.7 L441.7 341.2 L443.2 341.7 L444.8 342.1 L446.3 342.6 L447.7 343.2 L449.2 343.7 L450.6 344.2 L452 344.8 L453.3 345.4 L454.6 346 L455.9 346.6 L457.1 347.3 L458.2 347.9 L459.3 348.6 L460.4 349.3 L461.3 350 L462.3 350.7 L463.1 351.4 L463.9 352.1 L464.6 352.8 L465.3 353.6 L465.9 354.3 L466.4 355.1 L466.8 355.9 L467.2 356.6 L467.4 357.4 L467.6 358.2 L467.8 359 L467.8 359.8 L467.8 360.6 L467.6 361.4 L467.4 362.2 L467.2 363 L466.8 363.7 L466.4 364.5 L465.9 365.3 L465.3 366 L464.6 366.8 L463.9 367.5 L463.1 368.2 L462.3 368.9 L461.3 369.6 L460.4 370.3 L459.3 371 L458.2 371.7 L457.1 372.3 L455.9 373 L454.6 373.6 L453.3 374.2 L452 374.8 L450.6 375.4 L449.2 375.9 L447.7 376.4 L446.3 377 L444.8 377.5 L443.2 377.9 L441.7 378.4 L440.2 378.9 L438.6 379.3 L437 379.7 L435.5 380.1 L433.9 380.4 L432.3 380.8 L430.8 381.1 L429.3 381.4 L427.7 381.7 L426.2 382 L424.8 382.2 L423.3 382.5 L421.9 382.7 L420.5 382.9 L419.2 383.1 L417.9 383.3 L416.6 383.4 L415.4 383.5 L414.3 383.7 L413.2 383.8 L412.2 383.9 L411.2 384 L410.3 384 L409.4 384.1 L408.6 384.1 L407.9 384.2 L407.3 384.2 L406.7 384.2 L406.2 384.3 L405.8 384.3 L405.4 384.3 L405.2 384.3 L405 384.3 L404.8 384.3 L404.8 384.1 L404.8 384.1 L404.8 381.5 L404.9 381.4 L405.1 381.4 L405.4 381.3 L405.7 381.2 L406.1 381.1 L406.6 381 L407.1 380.8 L407.7 380.7 L408.4 380.5 L409.2 380.4 L410 380.2 L410.9 380 L411.8 379.8 L412.8 379.5 L413.8 379.3 L414.9 379 L416.1 378.7 L417.3 378.5 L418.5 378.1 L419.8 377.8 L421.1 377.5 L422.5 377.1 L423.8 376.7 L425.2 376.3 L426.7 375.9 L428.1 375.5 L429.5 375 L431 374.6 L432.4 374.1 L433.9 373.6 L435.4 373.1 L436.8 372.6 L438.3 372 L439.7 371.5 L441.1 370.9 L442.4 370.3 L443.8 369.7 L445.1 369.2 L446.4 368.5 L447.6 367.9 L448.8 367.3 L449.9 366.7 L451 366.1 L452 365.5 L453 364.8 L453.9 364.2 L454.7 363.6 L455.4 363 L456.1 362.5 L456.7 361.9 L457.2 361.4 L457.6 361 L457.9 360.5 L458.2 360.2 L458.3 359.9 L458.5 359.7 L458.5 359.5 L458.5 359.4 L458.5 359.4 L458.4 359.5 L458.4 359.6 L458.4 359.8 L458.4 360 L458.4 360.1 L458.5 360.2 L458.5 360.2 L458.5 360.1 L458.5 359.9 L458.3 359.7 L458.2 359.4 L457.9 359.1 L457.6 358.6 L457.2 358.2 L456.7 357.7 L456.1 357.1 L455.4 356.6 L454.7 356 L453.9 355.4 L453 354.8 L452 354.1 L451 353.5 L449.9 352.9 L448.8 352.3 L447.6 351.7 L446.4 351.1 L445.1 350.4 L443.8 349.9 L442.4 349.3 L441.1 348.7 L439.7 348.1 L438.3 347.6 L436.8 347 L435.4 346.5 L433.9 346 L432.4 345.5 L431 345 L429.5 344.6 L428.1 344.1 L426.7 343.7 L425.2 343.3 L423.8 342.9 L422.5 342.5 L421.1 342.1 L419.8 341.8 L418.5 341.5 L417.3 341.1 L416.1 340.9 L414.9 340.6 L413.8 340.3 L412.8 340.1 L411.8 339.8 L410.9 339.6 L410 339.4 L409.2 339.2 L408.4 339.1 L407.7 338.9 L407.1 338.8 L406.6 338.6 L406.1 338.5 L405.7 338.4 L405.4 338.3 L405.1 338.2 L404.9 338.2 L404.8 338.1 L404.8 335.5 Z M404.8 384.1 L404.8 383.9 L405 383.9 L405.1 383.9 L405.4 383.9 L405.8 383.9 L406.2 383.9 L406.7 384 L407.2 384 L407.9 384 L408.6 384.1 L409.4 384.1 L410.2 384.2 L411.1 384.2 L412.1 384.3 L413.1 384.4 L414.2 384.5 L415.3 384.6 L416.5 384.8 L417.7 384.9 L419 385.1 L420.3 385.3 L421.7 385.5 L423.1 385.7 L424.5 385.9 L426 386.2 L427.5 386.4 L429 386.7 L430.5 387 L432 387.3 L433.6 387.7 L435.1 388 L436.7 388.4 L438.2 388.8 L439.8 389.2 L441.3 389.7 L442.8 390.1 L444.4 390.6 L445.9 391.1 L447.3 391.6 L448.8 392.1 L450.2 392.7 L451.6 393.2 L452.9 393.8 L454.2 394.4 L455.5 395 L456.7 395.7 L457.8 396.3 L459 397 L460 397.6 L461 398.3 L461.9 399 L462.8 399.7 L463.6 400.4 L464.4 401.1 L465 401.9 L465.6 402.6 L466.2 403.4 L466.6 404.1 L467 404.9 L467.3 405.7 L467.6 406.5 L467.7 407.3 L467.8 408 L467.8 408.8 L467.7 409.6 L467.5 410.4 L467.3 411.2 L467 411.9 L466.6 412.7 L466.1 413.5 L465.6 414.2 L465 415 L464.3 415.7 L463.6 416.4 L462.7 417.2 L461.9 417.9 L460.9 418.6 L459.9 419.2 L455.1 411.9 L455.8 411.3 L456.4 410.8 L457 410.3 L457.4 409.8 L457.8 409.3 L458.1 408.9 L458.3 408.6 L458.4 408.4 L458.5 408.2 L458.5 408.1 L458.5 408 L458.5 408.1 L458.4 408.2 L458.4 408.3 L458.4 408.5 L458.4 408.6 L458.5 408.7 L458.5 408.8 L458.5 408.7 L458.5 408.6 L458.4 408.5 L458.3 408.2 L458.1 407.9 L457.8 407.5 L457.4 407.1 L457 406.6 L456.5 406.1 L455.9 405.5 L455.2 405 L454.4 404.4 L453.6 403.8 L452.7 403.2 L451.7 402.5 L450.7 401.9 L449.6 401.3 L448.4 400.7 L447.2 400.1 L446 399.5 L444.7 398.9 L443.4 398.3 L442.1 397.7 L440.7 397.1 L439.3 396.6 L437.9 396 L436.5 395.5 L435 395 L433.6 394.5 L432.1 394 L430.7 393.5 L429.2 393.1 L427.8 392.6 L426.4 392.2 L425 391.8 L423.6 391.4 L422.2 391 L420.9 390.7 L419.6 390.3 L418.3 390 L417.1 389.7 L415.9 389.4 L414.8 389.1 L413.7 388.9 L412.7 388.6 L411.7 388.4 L410.8 388.2 L409.9 388 L409.1 387.8 L408.4 387.6 L407.7 387.5 L407.1 387.4 L406.5 387.2 L406.1 387.1 L405.7 387 L405.3 386.9 L405.1 386.8 L404.9 386.8 L404.8 386.7 L404.8 384.1 Z" fill="#ecdccd" stroke="none"/><ellipse cx="406.3" cy="286.9" rx="4.5" ry="2.8" fill="#ecdccd"/><ellipse cx="406.3" cy="335.5" rx="4.5" ry="2.8" fill="#ecdccd"/><ellipse cx="406.3" cy="384.1" rx="4.5" ry="2.8" fill="#ecdccd"/></g><g opacity="0.92"><path d="M436.7 268.3 L435.7 269 L434.6 269.6 L433.5 270.3 L432.4 270.9 L431.1 271.5 L429.9 272.1 L428.6 272.7 L427.2 273.3 L425.9 273.9 L424.4 274.4 L423 274.9 L421.5 275.4 L420 275.9 L418.5 276.4 L417 276.9 L415.5 277.3 L413.9 277.7 L412.4 278.1 L410.8 278.5 L409.3 278.8 L407.7 279.2 L406.2 279.5 L404.7 279.8 L403.2 280.1 L401.7 280.3 L400.2 280.6 L398.8 280.8 L397.4 281 L396.1 281.2 L394.7 281.4 L393.5 281.6 L392.2 281.7 L391.1 281.9 L389.9 282 L388.9 282.1 L387.8 282.2 L386.9 282.3 L386 282.3 L385.1 282.4 L384.4 282.4 L383.7 282.5 L383 282.5 L382.5 282.5 L382 282.6 L381.6 282.6 L381.2 282.6 L380.9 282.6 L380.8 282.6 L380.6 282.6 L380.6 282.4 L380.6 282.4 L380.6 279.8 L380.7 279.7 L380.9 279.7 L381.1 279.6 L381.5 279.5 L381.9 279.4 L382.3 279.3 L382.9 279.2 L383.5 279 L384.1 278.9 L384.9 278.7 L385.7 278.5 L386.5 278.3 L387.5 278.1 L388.4 277.9 L389.5 277.6 L390.6 277.4 L391.7 277.1 L392.9 276.8 L394.1 276.5 L395.4 276.2 L396.6 275.8 L398 275.5 L399.3 275.1 L400.7 274.7 L402.1 274.3 L403.5 273.9 L405 273.5 L406.4 273 L407.8 272.5 L409.3 272 L410.7 271.5 L412.2 271 L413.6 270.5 L415 270 L416.4 269.4 L417.8 268.8 L419.1 268.3 L420.4 267.7 L421.7 267.1 L422.9 266.5 L424.1 265.9 L425.3 265.2 L426.4 264.6 L427.4 264 L428.4 263.4 L429.3 262.8 L430.1 262.2 L430.9 261.6 L431.6 261 Z M380.6 282.4 L380.6 282.2 L380.8 282.2 L381 282.2 L381.2 282.2 L381.6 282.2 L382 282.2 L382.5 282.3 L383.1 282.3 L383.7 282.3 L384.4 282.4 L385.2 282.4 L386.1 282.5 L387 282.5 L388 282.6 L389 282.7 L390.1 282.8 L391.2 283 L392.4 283.1 L393.7 283.2 L395 283.4 L396.3 283.6 L397.7 283.8 L399.1 284 L400.6 284.3 L402 284.5 L403.5 284.8 L405.1 285.1 L406.6 285.4 L408.1 285.7 L409.7 286.1 L411.3 286.4 L412.8 286.8 L414.4 287.2 L416 287.6 L417.5 288.1 L419 288.6 L420.6 289 L422.1 289.5 L423.5 290.1 L425 290.6 L426.4 291.1 L427.8 291.7 L429.1 292.3 L430.4 292.9 L431.7 293.5 L432.9 294.2 L434 294.8 L435.1 295.5 L436.2 296.2 L437.1 296.9 L438.1 297.6 L438.9 298.3 L439.7 299 L440.4 299.7 L441.1 300.5 L441.7 301.2 L442.2 302 L442.6 302.8 L443 303.5 L443.2 304.3 L443.4 305.1 L443.6 305.9 L443.6 306.7 L443.6 307.5 L443.4 308.3 L443.2 309.1 L443 309.9 L442.6 310.6 L442.2 311.4 L441.7 312.2 L441.1 312.9 L440.4 313.7 L439.7 314.4 L438.9 315.1 L438.1 315.8 L437.1 316.5 L436.2 317.2 L435.1 317.9 L434 318.6 L432.9 319.2 L431.7 319.9 L430.4 320.5 L429.1 321.1 L427.8 321.7 L426.4 322.3 L425 322.8 L423.5 323.3 L422.1 323.9 L420.6 324.4 L419 324.8 L417.5 325.3 L416 325.8 L414.4 326.2 L412.8 326.6 L411.3 327 L409.7 327.3 L408.1 327.7 L406.6 328 L405.1 328.3 L403.5 328.6 L402 328.9 L400.6 329.1 L399.1 329.4 L397.7 329.6 L396.3 329.8 L395 330 L393.7 330.2 L392.4 330.3 L391.2 330.4 L390.1 330.6 L389 330.7 L388 330.8 L387 330.9 L386.1 330.9 L385.2 331 L384.4 331 L383.7 331.1 L383.1 331.1 L382.5 331.1 L382 331.2 L381.6 331.2 L381.2 331.2 L381 331.2 L380.8 331.2 L380.6 331.2 L380.6 331 L380.6 331 L380.6 328.4 L380.7 328.3 L380.9 328.3 L381.2 328.2 L381.5 328.1 L381.9 328 L382.4 327.9 L382.9 327.7 L383.5 327.6 L384.2 327.4 L385 327.3 L385.8 327.1 L386.7 326.9 L387.6 326.7 L388.6 326.4 L389.6 326.2 L390.7 325.9 L391.9 325.6 L393.1 325.4 L394.3 325 L395.6 324.7 L396.9 324.4 L398.3 324 L399.6 323.6 L401 323.2 L402.5 322.8 L403.9 322.4 L405.3 321.9 L406.8 321.5 L408.2 321 L409.7 320.5 L411.2 320 L412.6 319.5 L414.1 318.9 L415.5 318.4 L416.9 317.8 L418.2 317.2 L419.6 316.6 L420.9 316.1 L422.2 315.4 L423.4 314.8 L424.6 314.2 L425.7 313.6 L426.8 313 L427.8 312.4 L428.8 311.7 L429.7 311.1 L430.5 310.5 L431.2 309.9 L431.9 309.4 L432.5 308.8 L433 308.3 L433.4 307.9 L433.7 307.4 L434 307.1 L434.1 306.8 L434.3 306.6 L434.3 306.4 L434.3 306.3 L434.3 306.3 L434.2 306.4 L434.2 306.5 L434.2 306.7 L434.2 306.9 L434.2 307 L434.3 307.1 L434.3 307.1 L434.3 307 L434.3 306.8 L434.1 306.6 L434 306.3 L433.7 306 L433.4 305.5 L433 305.1 L432.5 304.6 L431.9 304 L431.2 303.5 L430.5 302.9 L429.7 302.3 L428.8 301.7 L427.8 301 L426.8 300.4 L425.7 299.8 L424.6 299.2 L423.4 298.6 L422.2 298 L420.9 297.3 L419.6 296.8 L418.2 296.2 L416.9 295.6 L415.5 295 L414.1 294.5 L412.6 293.9 L411.2 293.4 L409.7 292.9 L408.2 292.4 L406.8 291.9 L405.3 291.5 L403.9 291 L402.5 290.6 L401 290.2 L399.6 289.8 L398.3 289.4 L396.9 289 L395.6 288.7 L394.3 288.4 L393.1 288 L391.9 287.8 L390.7 287.5 L389.6 287.2 L388.6 287 L387.6 286.7 L386.7 286.5 L385.8 286.3 L385 286.1 L384.2 286 L383.5 285.8 L382.9 285.7 L382.4 285.5 L381.9 285.4 L381.5 285.3 L381.2 285.2 L380.9 285.1 L380.7 285.1 L380.6 285 L380.6 282.4 Z M380.6 331 L380.6 330.8 L380.8 330.8 L381 330.8 L381.2 330.8 L381.6 330.8 L382 330.8 L382.5 330.9 L383.1 330.9 L383.7 330.9 L384.4 331 L385.2 331 L386.1 331.1 L387 331.1 L388 331.2 L389 331.3 L390.1 331.4 L391.2 331.6 L392.4 331.7 L393.7 331.8 L395 332 L396.3 332.2 L397.7 332.4 L399.1 332.6 L400.6 332.9 L402 333.1 L403.5 333.4 L405.1 333.7 L406.6 334 L408.1 334.3 L409.7 334.7 L411.3 335 L412.8 335.4 L414.4 335.8 L416 336.2 L417.5 336.7 L419 337.2 L420.6 337.6 L422.1 338.1 L423.5 338.7 L425 339.2 L426.4 339.7 L427.8 340.3 L429.1 340.9 L430.4 341.5 L431.7 342.1 L432.9 342.8 L434 343.4 L435.1 344.1 L436.2 344.8 L437.1 345.5 L438.1 346.2 L438.9 346.9 L439.7 347.6 L440.4 348.3 L441.1 349.1 L441.7 349.8 L442.2 350.6 L442.6 351.4 L443 352.1 L443.2 352.9 L443.4 353.7 L443.6 354.5 L443.6 355.3 L443.6 356.1 L443.4 356.9 L443.2 357.7 L443 358.5 L442.6 359.2 L442.2 360 L441.7 360.8 L441.1 361.5 L440.4 362.3 L439.7 363 L438.9 363.7 L438.1 364.4 L437.1 365.1 L436.2 365.8 L435.1 366.5 L434 367.2 L432.9 367.8 L431.7 368.5 L430.4 369.1 L429.1 369.7 L427.8 370.3 L426.4 370.9 L425 371.4 L423.5 371.9 L422.1 372.5 L420.6 373 L419 373.4 L417.5 373.9 L416 374.4 L414.4 374.8 L412.8 375.2 L411.3 375.6 L409.7 375.9 L408.1 376.3 L406.6 376.6 L405.1 376.9 L403.5 377.2 L402 377.5 L400.6 377.7 L399.1 378 L397.7 378.2 L396.3 378.4 L395 378.6 L393.7 378.8 L392.4 378.9 L391.2 379 L390.1 379.2 L389 379.3 L388 379.4 L387 379.5 L386.1 379.5 L385.2 379.6 L384.4 379.6 L383.7 379.7 L383.1 379.7 L382.5 379.7 L382 379.8 L381.6 379.8 L381.2 379.8 L381 379.8 L380.8 379.8 L380.6 379.8 L380.6 379.6 L380.6 379.6 L380.6 377 L380.7 376.9 L380.9 376.9 L381.2 376.8 L381.5 376.7 L381.9 376.6 L382.4 376.5 L382.9 376.3 L383.5 376.2 L384.2 376 L385 375.9 L385.8 375.7 L386.7 375.5 L387.6 375.3 L388.6 375 L389.6 374.8 L390.7 374.5 L391.9 374.2 L393.1 374 L394.3 373.6 L395.6 373.3 L396.9 373 L398.3 372.6 L399.6 372.2 L401 371.8 L402.5 371.4 L403.9 371 L405.3 370.5 L406.8 370.1 L408.2 369.6 L409.7 369.1 L411.2 368.6 L412.6 368.1 L414.1 367.5 L415.5 367 L416.9 366.4 L418.2 365.8 L419.6 365.2 L420.9 364.7 L422.2 364 L423.4 363.4 L424.6 362.8 L425.7 362.2 L426.8 361.6 L427.8 361 L428.8 360.3 L429.7 359.7 L430.5 359.1 L431.2 358.5 L431.9 358 L432.5 357.4 L433 356.9 L433.4 356.5 L433.7 356 L434 355.7 L434.1 355.4 L434.3 355.2 L434.3 355 L434.3 354.9 L434.3 354.9 L434.2 355 L434.2 355.1 L434.2 355.3 L434.2 355.5 L434.2 355.6 L434.3 355.7 L434.3 355.7 L434.3 355.6 L434.3 355.4 L434.1 355.2 L434 354.9 L433.7 354.6 L433.4 354.1 L433 353.7 L432.5 353.2 L431.9 352.6 L431.2 352.1 L430.5 351.5 L429.7 350.9 L428.8 350.3 L427.8 349.6 L426.8 349 L425.7 348.4 L424.6 347.8 L423.4 347.2 L422.2 346.6 L420.9 345.9 L419.6 345.4 L418.2 344.8 L416.9 344.2 L415.5 343.6 L414.1 343.1 L412.6 342.5 L411.2 342 L409.7 341.5 L408.2 341 L406.8 340.5 L405.3 340.1 L403.9 339.6 L402.5 339.2 L401 338.8 L399.6 338.4 L398.3 338 L396.9 337.6 L395.6 337.3 L394.3 337 L393.1 336.6 L391.9 336.4 L390.7 336.1 L389.6 335.8 L388.6 335.6 L387.6 335.3 L386.7 335.1 L385.8 334.9 L385 334.7 L384.2 334.6 L383.5 334.4 L382.9 334.3 L382.4 334.1 L381.9 334 L381.5 333.9 L381.2 333.8 L380.9 333.7 L380.7 333.7 L380.6 333.6 L380.6 331 Z M380.6 379.6 L380.6 379.4 L380.8 379.4 L380.9 379.4 L381.2 379.4 L381.6 379.4 L382 379.4 L382.5 379.5 L383 379.5 L383.7 379.5 L384.4 379.6 L385.2 379.6 L386 379.7 L386.9 379.7 L387.9 379.8 L388.9 379.9 L390 380 L391.1 380.1 L392.3 380.3 L393.5 380.4 L394.8 380.6 L396.1 380.8 L397.5 381 L398.9 381.2 L400.3 381.4 L401.8 381.7 L403.3 381.9 L404.8 382.2 L406.3 382.5 L407.8 382.8 L409.4 383.2 L410.9 383.5 L412.5 383.9 L414 384.3 L415.6 384.7 L417.1 385.2 L418.6 385.6 L420.2 386.1 L421.7 386.6 L423.1 387.1 L424.6 387.6 L426 388.2 L427.4 388.7 L428.7 389.3 L430 389.9 L431.3 390.5 L432.5 391.2 L433.6 391.8 L434.8 392.5 L435.8 393.1 L436.8 393.8 L437.7 394.5 L438.6 395.2 L439.4 395.9 L440.2 396.6 L440.8 397.4 L441.4 398.1 L442 398.9 L442.4 399.6 L442.8 400.4 L443.1 401.2 L443.4 402 L443.5 402.8 L443.6 403.5 L443.6 404.3 L443.5 405.1 L443.3 405.9 L443.1 406.7 L442.8 407.4 L442.4 408.2 L441.9 409 L441.4 409.7 L440.8 410.5 L440.1 411.2 L439.4 411.9 L438.5 412.7 L437.7 413.4 L436.7 414.1 L435.7 414.7 L430.9 407.4 L431.6 406.8 L432.2 406.3 L432.8 405.8 L433.2 405.3 L433.6 404.8 L433.9 404.4 L434.1 404.1 L434.2 403.9 L434.3 403.7 L434.3 403.6 L434.3 403.5 L434.3 403.6 L434.2 403.7 L434.2 403.8 L434.2 404 L434.2 404.1 L434.3 404.2 L434.3 404.3 L434.3 404.2 L434.3 404.1 L434.2 404 L434.1 403.7 L433.9 403.4 L433.6 403 L433.2 402.6 L432.8 402.1 L432.3 401.6 L431.7 401 L431 400.5 L430.2 399.9 L429.4 399.3 L428.5 398.7 L427.5 398 L426.5 397.4 L425.4 396.8 L424.2 396.2 L423 395.6 L421.8 395 L420.5 394.4 L419.2 393.8 L417.9 393.2 L416.5 392.6 L415.1 392.1 L413.7 391.5 L412.3 391 L410.8 390.5 L409.4 390 L407.9 389.5 L406.5 389 L405 388.6 L403.6 388.1 L402.2 387.7 L400.8 387.3 L399.4 386.9 L398 386.5 L396.7 386.2 L395.4 385.8 L394.1 385.5 L392.9 385.2 L391.7 384.9 L390.6 384.6 L389.5 384.4 L388.5 384.1 L387.5 383.9 L386.6 383.7 L385.7 383.5 L384.9 383.3 L384.2 383.1 L383.5 383 L382.9 382.9 L382.3 382.7 L381.9 382.6 L381.5 382.5 L381.1 382.4 L380.9 382.3 L380.7 382.3 L380.6 382.2 L380.6 379.6 Z" fill="#e0f0e0" stroke="none"/><ellipse cx="382.1" cy="282.4" rx="4.5" ry="2.8" fill="#e0f0e0"/><ellipse cx="382.1" cy="331" rx="4.5" ry="2.8" fill="#e0f0e0"/><ellipse cx="382.1" cy="379.6" rx="4.5" ry="2.8" fill="#e0f0e0"/></g><g opacity="0.92"><path d="M413.9 265.7 L412.9 266.4 L411.8 267 L410.7 267.7 L409.6 268.3 L408.3 268.9 L407.1 269.5 L405.8 270.1 L404.4 270.7 L403.1 271.3 L401.6 271.8 L400.2 272.3 L398.7 272.8 L397.2 273.3 L395.7 273.8 L394.2 274.3 L392.7 274.7 L391.1 275.1 L389.6 275.5 L388 275.9 L386.5 276.2 L384.9 276.6 L383.4 276.9 L381.9 277.2 L380.4 277.5 L378.9 277.7 L377.4 278 L376 278.2 L374.6 278.4 L373.3 278.6 L371.9 278.8 L370.7 279 L369.4 279.1 L368.3 279.3 L367.1 279.4 L366.1 279.5 L365 279.6 L364.1 279.7 L363.2 279.7 L362.3 279.8 L361.6 279.8 L360.9 279.9 L360.2 279.9 L359.7 279.9 L359.2 280 L358.8 280 L358.4 280 L358.1 280 L358 280 L357.8 280 L357.8 279.8 L357.8 279.8 L357.8 277.2 L357.9 277.1 L358.1 277.1 L358.3 277 L358.7 276.9 L359.1 276.8 L359.5 276.7 L360.1 276.6 L360.7 276.4 L361.3 276.3 L362.1 276.1 L362.9 275.9 L363.7 275.7 L364.7 275.5 L365.6 275.3 L366.7 275 L367.8 274.8 L368.9 274.5 L370.1 274.2 L371.3 273.9 L372.6 273.6 L373.8 273.2 L375.2 272.9 L376.5 272.5 L377.9 272.1 L379.3 271.7 L380.7 271.3 L382.2 270.9 L383.6 270.4 L385 269.9 L386.5 269.4 L387.9 268.9 L389.4 268.4 L390.8 267.9 L392.2 267.4 L393.6 266.8 L395 266.2 L396.3 265.7 L397.6 265.1 L398.9 264.5 L400.1 263.9 L401.3 263.3 L402.5 262.6 L403.6 262 L404.6 261.4 L405.6 260.8 L406.5 260.2 L407.3 259.6 L408.1 259 L408.8 258.4 Z M357.8 279.8 L357.8 279.6 L358 279.6 L358.2 279.6 L358.4 279.6 L358.8 279.6 L359.2 279.6 L359.7 279.7 L360.3 279.7 L360.9 279.7 L361.6 279.8 L362.4 279.8 L363.3 279.9 L364.2 279.9 L365.2 280 L366.2 280.1 L367.3 280.2 L368.4 280.4 L369.6 280.5 L370.9 280.6 L372.2 280.8 L373.5 281 L374.9 281.2 L376.3 281.4 L377.8 281.7 L379.2 281.9 L380.7 282.2 L382.3 282.5 L383.8 282.8 L385.3 283.1 L386.9 283.5 L388.5 283.8 L390 284.2 L391.6 284.6 L393.2 285 L394.7 285.5 L396.2 286 L397.8 286.4 L399.3 286.9 L400.7 287.5 L402.2 288 L403.6 288.5 L405 289.1 L406.3 289.7 L407.6 290.3 L408.9 290.9 L410.1 291.6 L411.2 292.2 L412.3 292.9 L413.4 293.6 L414.3 294.3 L415.3 295 L416.1 295.7 L416.9 296.4 L417.6 297.1 L418.3 297.9 L418.9 298.6 L419.4 299.4 L419.8 300.2 L420.2 300.9 L420.4 301.7 L420.6 302.5 L420.8 303.3 L420.8 304.1 L420.8 304.9 L420.6 305.7 L420.4 306.5 L420.2 307.3 L419.8 308 L419.4 308.8 L418.9 309.6 L418.3 310.3 L417.6 311.1 L416.9 311.8 L416.1 312.5 L415.3 313.2 L414.3 313.9 L413.4 314.6 L412.3 315.3 L411.2 316 L410.1 316.6 L408.9 317.3 L407.6 317.9 L406.3 318.5 L405 319.1 L403.6 319.7 L402.2 320.2 L400.7 320.7 L399.3 321.3 L397.8 321.8 L396.2 322.2 L394.7 322.7 L393.2 323.2 L391.6 323.6 L390 324 L388.5 324.4 L386.9 324.7 L385.3 325.1 L383.8 325.4 L382.3 325.7 L380.7 326 L379.2 326.3 L377.8 326.5 L376.3 326.8 L374.9 327 L373.5 327.2 L372.2 327.4 L370.9 327.6 L369.6 327.7 L368.4 327.8 L367.3 328 L366.2 328.1 L365.2 328.2 L364.2 328.3 L363.3 328.3 L362.4 328.4 L361.6 328.4 L360.9 328.5 L360.3 328.5 L359.7 328.5 L359.2 328.6 L358.8 328.6 L358.4 328.6 L358.2 328.6 L358 328.6 L357.8 328.6 L357.8 328.4 L357.8 328.4 L357.8 325.8 L357.9 325.7 L358.1 325.7 L358.4 325.6 L358.7 325.5 L359.1 325.4 L359.6 325.3 L360.1 325.1 L360.7 325 L361.4 324.8 L362.2 324.7 L363 324.5 L363.9 324.3 L364.8 324.1 L365.8 323.8 L366.8 323.6 L367.9 323.3 L369.1 323 L370.3 322.8 L371.5 322.4 L372.8 322.1 L374.1 321.8 L375.5 321.4 L376.8 321 L378.2 320.6 L379.7 320.2 L381.1 319.8 L382.5 319.3 L384 318.9 L385.4 318.4 L386.9 317.9 L388.4 317.4 L389.8 316.9 L391.3 316.3 L392.7 315.8 L394.1 315.2 L395.4 314.6 L396.8 314 L398.1 313.5 L399.4 312.8 L400.6 312.2 L401.8 311.6 L402.9 311 L404 310.4 L405 309.8 L406 309.1 L406.9 308.5 L407.7 307.9 L408.4 307.3 L409.1 306.8 L409.7 306.2 L410.2 305.7 L410.6 305.3 L410.9 304.8 L411.2 304.5 L411.3 304.2 L411.5 304 L411.5 303.8 L411.5 303.7 L411.5 303.7 L411.4 303.8 L411.4 303.9 L411.4 304.1 L411.4 304.3 L411.4 304.4 L411.5 304.5 L411.5 304.5 L411.5 304.4 L411.5 304.2 L411.3 304 L411.2 303.7 L410.9 303.4 L410.6 302.9 L410.2 302.5 L409.7 302 L409.1 301.4 L408.4 300.9 L407.7 300.3 L406.9 299.7 L406 299.1 L405 298.4 L404 297.8 L402.9 297.2 L401.8 296.6 L400.6 296 L399.4 295.4 L398.1 294.7 L396.8 294.2 L395.4 293.6 L394.1 293 L392.7 292.4 L391.3 291.9 L389.8 291.3 L388.4 290.8 L386.9 290.3 L385.4 289.8 L384 289.3 L382.5 288.9 L381.1 288.4 L379.7 288 L378.2 287.6 L376.8 287.2 L375.5 286.8 L374.1 286.4 L372.8 286.1 L371.5 285.8 L370.3 285.4 L369.1 285.2 L367.9 284.9 L366.8 284.6 L365.8 284.4 L364.8 284.1 L363.9 283.9 L363 283.7 L362.2 283.5 L361.4 283.4 L360.7 283.2 L360.1 283.1 L359.6 282.9 L359.1 282.8 L358.7 282.7 L358.4 282.6 L358.1 282.5 L357.9 282.5 L357.8 282.4 L357.8 279.8 Z M357.8 328.4 L357.8 328.2 L358 328.2 L358.2 328.2 L358.4 328.2 L358.8 328.2 L359.2 328.2 L359.7 328.3 L360.3 328.3 L360.9 328.3 L361.6 328.4 L362.4 328.4 L363.3 328.5 L364.2 328.5 L365.2 328.6 L366.2 328.7 L367.3 328.8 L368.4 329 L369.6 329.1 L370.9 329.2 L372.2 329.4 L373.5 329.6 L374.9 329.8 L376.3 330 L377.8 330.3 L379.2 330.5 L380.7 330.8 L382.3 331.1 L383.8 331.4 L385.3 331.7 L386.9 332.1 L388.5 332.4 L390 332.8 L391.6 333.2 L393.2 333.6 L394.7 334.1 L396.2 334.6 L397.8 335 L399.3 335.5 L400.7 336.1 L402.2 336.6 L403.6 337.1 L405 337.7 L406.3 338.3 L407.6 338.9 L408.9 339.5 L410.1 340.2 L411.2 340.8 L412.3 341.5 L413.4 342.2 L414.3 342.9 L415.3 343.6 L416.1 344.3 L416.9 345 L417.6 345.7 L418.3 346.5 L418.9 347.2 L419.4 348 L419.8 348.8 L420.2 349.5 L420.4 350.3 L420.6 351.1 L420.8 351.9 L420.8 352.7 L420.8 353.5 L420.6 354.3 L420.4 355.1 L420.2 355.9 L419.8 356.6 L419.4 357.4 L418.9 358.2 L418.3 358.9 L417.6 359.7 L416.9 360.4 L416.1 361.1 L415.3 361.8 L414.3 362.5 L413.4 363.2 L412.3 363.9 L411.2 364.6 L410.1 365.2 L408.9 365.9 L407.6 366.5 L406.3 367.1 L405 367.7 L403.6 368.3 L402.2 368.8 L400.7 369.3 L399.3 369.9 L397.8 370.4 L396.2 370.8 L394.7 371.3 L393.2 371.8 L391.6 372.2 L390 372.6 L388.5 373 L386.9 373.3 L385.3 373.7 L383.8 374 L382.3 374.3 L380.7 374.6 L379.2 374.9 L377.8 375.1 L376.3 375.4 L374.9 375.6 L373.5 375.8 L372.2 376 L370.9 376.2 L369.6 376.3 L368.4 376.4 L367.3 376.6 L366.2 376.7 L365.2 376.8 L364.2 376.9 L363.3 376.9 L362.4 377 L361.6 377 L360.9 377.1 L360.3 377.1 L359.7 377.1 L359.2 377.2 L358.8 377.2 L358.4 377.2 L358.2 377.2 L358 377.2 L357.8 377.2 L357.8 377 L357.8 377 L357.8 374.4 L357.9 374.3 L358.1 374.3 L358.4 374.2 L358.7 374.1 L359.1 374 L359.6 373.9 L360.1 373.7 L360.7 373.6 L361.4 373.4 L362.2 373.3 L363 373.1 L363.9 372.9 L364.8 372.7 L365.8 372.4 L366.8 372.2 L367.9 371.9 L369.1 371.6 L370.3 371.4 L371.5 371 L372.8 370.7 L374.1 370.4 L375.5 370 L376.8 369.6 L378.2 369.2 L379.7 368.8 L381.1 368.4 L382.5 367.9 L384 367.5 L385.4 367 L386.9 366.5 L388.4 366 L389.8 365.5 L391.3 364.9 L392.7 364.4 L394.1 363.8 L395.4 363.2 L396.8 362.6 L398.1 362.1 L399.4 361.4 L400.6 360.8 L401.8 360.2 L402.9 359.6 L404 359 L405 358.4 L406 357.7 L406.9 357.1 L407.7 356.5 L408.4 355.9 L409.1 355.4 L409.7 354.8 L410.2 354.3 L410.6 353.9 L410.9 353.4 L411.2 353.1 L411.3 352.8 L411.5 352.6 L411.5 352.4 L411.5 352.3 L411.5 352.3 L411.4 352.4 L411.4 352.5 L411.4 352.7 L411.4 352.9 L411.4 353 L411.5 353.1 L411.5 353.1 L411.5 353 L411.5 352.8 L411.3 352.6 L411.2 352.3 L410.9 352 L410.6 351.5 L410.2 351.1 L409.7 350.6 L409.1 350 L408.4 349.5 L407.7 348.9 L406.9 348.3 L406 347.7 L405 347 L404 346.4 L402.9 345.8 L401.8 345.2 L400.6 344.6 L399.4 344 L398.1 343.3 L396.8 342.8 L395.4 342.2 L394.1 341.6 L392.7 341 L391.3 340.5 L389.8 339.9 L388.4 339.4 L386.9 338.9 L385.4 338.4 L384 337.9 L382.5 337.5 L381.1 337 L379.7 336.6 L378.2 336.2 L376.8 335.8 L375.5 335.4 L374.1 335 L372.8 334.7 L371.5 334.4 L370.3 334 L369.1 333.8 L367.9 333.5 L366.8 333.2 L365.8 333 L364.8 332.7 L363.9 332.5 L363 332.3 L362.2 332.1 L361.4 332 L360.7 331.8 L360.1 331.7 L359.6 331.5 L359.1 331.4 L358.7 331.3 L358.4 331.2 L358.1 331.1 L357.9 331.1 L357.8 331 L357.8 328.4 Z M357.8 377 L357.8 376.8 L358 376.8 L358.1 376.8 L358.4 376.8 L358.8 376.8 L359.2 376.8 L359.7 376.9 L360.2 376.9 L360.9 376.9 L361.6 377 L362.4 377 L363.2 377.1 L364.1 377.1 L365.1 377.2 L366.1 377.3 L367.2 377.4 L368.3 377.5 L369.5 377.7 L370.7 377.8 L372 378 L373.3 378.2 L374.7 378.4 L376.1 378.6 L377.5 378.8 L379 379.1 L380.5 379.3 L382 379.6 L383.5 379.9 L385 380.2 L386.6 380.6 L388.1 380.9 L389.7 381.3 L391.2 381.7 L392.8 382.1 L394.3 382.6 L395.8 383 L397.4 383.5 L398.9 384 L400.3 384.5 L401.8 385 L403.2 385.6 L404.6 386.1 L405.9 386.7 L407.2 387.3 L408.5 387.9 L409.7 388.6 L410.8 389.2 L412 389.9 L413 390.5 L414 391.2 L414.9 391.9 L415.8 392.6 L416.6 393.3 L417.4 394 L418 394.8 L418.6 395.5 L419.2 396.3 L419.6 397 L420 397.8 L420.3 398.6 L420.6 399.4 L420.7 400.2 L420.8 400.9 L420.8 401.7 L420.7 402.5 L420.5 403.3 L420.3 404.1 L420 404.8 L419.6 405.6 L419.1 406.4 L418.6 407.1 L418 407.9 L417.3 408.6 L416.6 409.3 L415.7 410.1 L414.9 410.8 L413.9 411.5 L412.9 412.1 L408.1 404.8 L408.8 404.2 L409.4 403.7 L410 403.2 L410.4 402.7 L410.8 402.2 L411.1 401.8 L411.3 401.5 L411.4 401.3 L411.5 401.1 L411.5 401 L411.5 400.9 L411.5 401 L411.4 401.1 L411.4 401.2 L411.4 401.4 L411.4 401.5 L411.5 401.6 L411.5 401.7 L411.5 401.6 L411.5 401.5 L411.4 401.4 L411.3 401.1 L411.1 400.8 L410.8 400.4 L410.4 400 L410 399.5 L409.5 399 L408.9 398.4 L408.2 397.9 L407.4 397.3 L406.6 396.7 L405.7 396.1 L404.7 395.4 L403.7 394.8 L402.6 394.2 L401.4 393.6 L400.2 393 L399 392.4 L397.7 391.8 L396.4 391.2 L395.1 390.6 L393.7 390 L392.3 389.5 L390.9 388.9 L389.5 388.4 L388 387.9 L386.6 387.4 L385.1 386.9 L383.7 386.4 L382.2 386 L380.8 385.5 L379.4 385.1 L378 384.7 L376.6 384.3 L375.2 383.9 L373.9 383.6 L372.6 383.2 L371.3 382.9 L370.1 382.6 L368.9 382.3 L367.8 382 L366.7 381.8 L365.7 381.5 L364.7 381.3 L363.8 381.1 L362.9 380.9 L362.1 380.7 L361.4 380.5 L360.7 380.4 L360.1 380.3 L359.5 380.1 L359.1 380 L358.7 379.9 L358.3 379.8 L358.1 379.7 L357.9 379.7 L357.8 379.6 L357.8 377 Z" fill="#e2e2f3" stroke="none"/><ellipse cx="359.3" cy="279.8" rx="4.5" ry="2.8" fill="#e2e2f3"/><ellipse cx="359.3" cy="328.4" rx="4.5" ry="2.8" fill="#e2e2f3"/><ellipse cx="359.3" cy="377" rx="4.5" ry="2.8" fill="#e2e2f3"/></g>
<path d="M460.8 272.6 L459.8 273.3 L458.7 274 L457.6 274.6 L456.4 275.3 L455.2 275.9 L453.9 276.5 L452.6 277.1 L451.2 277.7 L449.8 278.2 L448.4 278.8 L446.9 279.3 L445.5 279.8 L443.9 280.3 L442.4 280.8 L440.9 281.2 L439.3 281.7 L437.7 282.1 L436.2 282.5 L434.6 282.9 L433 283.2 L431.5 283.6 L429.9 283.9 L428.4 284.2 L426.9 284.5 L425.4 284.7 L424 285 L422.5 285.2 L421.1 285.4 L419.8 285.6 L418.5 285.8 L417.2 285.9 L416 286.1 L414.8 286.2 L413.7 286.3 L412.6 286.4 L411.6 286.5 L410.6 286.6 L409.8 286.7 L409 286.7 L408.2 286.8 L407.5 286.8 L406.9 286.8 L406.4 286.9 L405.9 286.9 L405.6 286.9 L405.3 286.9 L405 286.9 L404.9 286.9 L404.8 286.9 L404.8 286.9 L404.9 286.9 L405.1 286.9 L405.3 286.9 L405.6 286.9 L406 286.9 L406.5 286.9 L407 287 L407.7 287 L408.3 287 L409.1 287.1 L409.9 287.1 L410.8 287.2 L411.8 287.3 L412.8 287.4 L413.9 287.5 L415 287.6 L416.2 287.7 L417.4 287.9 L418.7 288.1 L420 288.2 L421.4 288.4 L422.8 288.6 L424.2 288.9 L425.7 289.1 L427.2 289.4 L428.7 289.7 L430.2 290 L431.8 290.3 L433.3 290.6 L434.9 291 L436.5 291.4 L438 291.8 L439.6 292.2 L441.2 292.6 L442.7 293.1 L444.2 293.6 L445.7 294.1 L447.2 294.6 L448.7 295.1 L450.1 295.7 L451.5 296.2 L452.8 296.8 L454.2 297.4 L455.4 298 L456.6 298.7 L457.8 299.3 L458.9 300 L460 300.6 L461 301.3 L461.9 302 L462.8 302.7 L463.6 303.4 L464.3 304.2 L465 304.9 L465.6 305.7 L466.1 306.4 L466.5 307.2 L466.9 307.9 L467.2 308.7 L467.4 309.5 L467.5 310.2 L467.6 311 L467.6 311.8 L467.5 312.6 L467.3 313.3 L467 314.1 L466.7 314.9 L466.3 315.6 L465.8 316.4 L465.3 317.1 L464.6 317.9 L463.9 318.6 L463.2 319.3 L462.3 320 L461.4 320.7 L460.5 321.4 L459.4 322.1 L458.4 322.8 L457.2 323.4 L456 324.1 L454.8 324.7 L453.5 325.3 L452.2 325.9 L450.8 326.5 L449.4 327 L447.9 327.6 L446.5 328.1 L445 328.6 L443.5 329.1 L441.9 329.5 L440.4 330 L438.8 330.4 L437.2 330.8 L435.7 331.2 L434.1 331.6 L432.5 331.9 L431 332.3 L429.4 332.6 L427.9 332.9 L426.4 333.2 L424.9 333.4 L423.5 333.6 L422.1 333.9 L420.7 334.1 L419.3 334.3 L418 334.4 L416.8 334.6 L415.6 334.7 L414.4 334.9 L413.3 335 L412.3 335.1 L411.3 335.1 L410.4 335.2 L409.5 335.3 L408.7 335.3 L408 335.4 L407.3 335.4 L406.7 335.4 L406.2 335.5 L405.8 335.5 L405.5 335.5 L405.2 335.5 L405 335.5 L404.8 335.5 L404.8 335.5 L404.8 335.5 L404.9 335.5 L405.1 335.5 L405.4 335.5 L405.7 335.5 L406.2 335.5 L406.7 335.6 L407.2 335.6 L407.9 335.6 L408.6 335.7 L409.4 335.7 L410.2 335.8 L411.1 335.8 L412.1 335.9 L413.1 336 L414.2 336.1 L415.4 336.3 L416.6 336.4 L417.8 336.5 L419.1 336.7 L420.5 336.9 L421.8 337.1 L423.3 337.3 L424.7 337.6 L426.2 337.8 L427.7 338.1 L429.2 338.4 L430.7 338.7 L432.3 339 L433.8 339.4 L435.4 339.7 L437 340.1 L438.5 340.5 L440.1 340.9 L441.7 341.4 L443.2 341.8 L444.7 342.3 L446.2 342.8 L447.7 343.4 L449.1 343.9 L450.6 344.4 L451.9 345 L453.3 345.6 L454.6 346.2 L455.8 346.8 L457 347.5 L458.2 348.1 L459.3 348.8 L460.3 349.5 L461.3 350.1 L462.2 350.8 L463 351.6 L463.8 352.3 L464.5 353 L465.2 353.8 L465.7 354.5 L466.2 355.3 L466.7 356 L467 356.8 L467.3 357.5 L467.5 358.3 L467.6 359.1 L467.6 359.9 L467.6 360.6 L467.4 361.4 L467.2 362.2 L466.9 362.9 L466.6 363.7 L466.2 364.5 L465.7 365.2 L465.1 366 L464.4 366.7 L463.7 367.4 L462.9 368.2 L462 368.9 L461.1 369.6 L460.1 370.3 L459.1 370.9 L458 371.6 L456.8 372.2 L455.6 372.9 L454.4 373.5 L453.1 374.1 L451.7 374.7 L450.3 375.2 L448.9 375.8 L447.5 376.3 L446 376.8 L444.5 377.3 L443 377.8 L441.4 378.3 L439.9 378.7 L438.3 379.1 L436.7 379.6 L435.2 379.9 L433.6 380.3 L432 380.6 L430.5 381 L429 381.3 L427.4 381.6 L425.9 381.8 L424.5 382.1 L423 382.3 L421.6 382.5 L420.2 382.7 L418.9 382.9 L417.6 383.1 L416.4 383.2 L415.2 383.4 L414.1 383.5 L413 383.6 L411.9 383.7 L411 383.8 L410.1 383.8 L409.2 383.9 L408.5 384 L407.8 384 L407.1 384 L406.6 384.1 L406.1 384.1 L405.7 384.1 L405.4 384.1 L405.1 384.1 L404.9 384.1 L404.8 384.1 L404.8 384.1 L404.9 384.1 L405 384.1 L405.2 384.1 L405.5 384.1 L405.9 384.1 L406.3 384.1 L406.8 384.2 L407.4 384.2 L408.1 384.2 L408.8 384.3 L409.6 384.3 L410.5 384.4 L411.4 384.5 L412.4 384.6 L413.5 384.7 L414.6 384.8 L415.8 384.9 L417 385 L418.2 385.2 L419.6 385.4 L420.9 385.6 L422.3 385.8 L423.7 386 L425.2 386.2 L426.7 386.5 L428.2 386.8 L429.7 387.1 L431.2 387.4 L432.8 387.7 L434.4 388.1 L435.9 388.4 L437.5 388.8 L439.1 389.3 L440.6 389.7 L442.2 390.1 L443.7 390.6 L445.2 391.1 L446.7 391.6 L448.2 392.1 L449.6 392.7 L451 393.2 L452.4 393.8 L453.7 394.4 L455 395 L456.2 395.6 L457.4 396.3 L458.5 396.9 L459.6 397.6 L460.6 398.3 L461.6 399 L462.5 399.7 L463.3 400.4 L464.1 401.1 L464.7 401.9 L465.4 402.6 L465.9 403.3 L466.4 404.1 L466.8 404.9 L467.1 405.6 L467.3 406.4 L467.5 407.2 L467.6 407.9 L467.6 408.7 L467.5 409.5 L467.4 410.3 L467.1 411 L466.8 411.8 L466.5 412.6 L466 413.3 L465.5 414.1 L464.9 414.8 L464.2 415.5 L463.4 416.3 L462.6 417 L461.8 417.7 L460.8 418.4 L459.8 419.1" fill="none" stroke="#4e3e30" stroke-width="1" stroke-linejoin="round"/><ellipse cx="459.7" cy="270.8" rx="4.1" ry="4.5" fill="#eadfd4" stroke="#4e3e30" stroke-width="1"/><ellipse cx="457.5" cy="415.5" rx="4.1" ry="4.5" fill="#eadfd4" stroke="#4e3e30" stroke-width="1"/><path d="M436.6 268.1 L435.6 268.8 L434.5 269.5 L433.4 270.1 L432.2 270.8 L431 271.4 L429.7 272 L428.4 272.6 L427 273.2 L425.6 273.7 L424.2 274.3 L422.7 274.8 L421.3 275.3 L419.7 275.8 L418.2 276.3 L416.7 276.7 L415.1 277.2 L413.5 277.6 L412 278 L410.4 278.4 L408.8 278.7 L407.3 279.1 L405.7 279.4 L404.2 279.7 L402.7 280 L401.2 280.2 L399.8 280.5 L398.3 280.7 L396.9 280.9 L395.6 281.1 L394.3 281.3 L393 281.4 L391.8 281.6 L390.6 281.7 L389.5 281.8 L388.4 281.9 L387.4 282 L386.4 282.1 L385.6 282.2 L384.8 282.2 L384 282.3 L383.3 282.3 L382.7 282.3 L382.2 282.4 L381.7 282.4 L381.4 282.4 L381.1 282.4 L380.8 282.4 L380.7 282.4 L380.6 282.4 L380.6 282.4 L380.7 282.4 L380.9 282.4 L381.1 282.4 L381.4 282.4 L381.8 282.4 L382.3 282.4 L382.8 282.5 L383.5 282.5 L384.1 282.5 L384.9 282.6 L385.7 282.6 L386.6 282.7 L387.6 282.8 L388.6 282.9 L389.7 283 L390.8 283.1 L392 283.2 L393.2 283.4 L394.5 283.6 L395.8 283.7 L397.2 283.9 L398.6 284.1 L400 284.4 L401.5 284.6 L403 284.9 L404.5 285.2 L406 285.5 L407.6 285.8 L409.1 286.1 L410.7 286.5 L412.3 286.9 L413.8 287.3 L415.4 287.7 L417 288.1 L418.5 288.6 L420 289.1 L421.5 289.6 L423 290.1 L424.5 290.6 L425.9 291.2 L427.3 291.7 L428.6 292.3 L430 292.9 L431.2 293.5 L432.4 294.2 L433.6 294.8 L434.7 295.5 L435.8 296.1 L436.8 296.8 L437.7 297.5 L438.6 298.2 L439.4 298.9 L440.1 299.7 L440.8 300.4 L441.4 301.2 L441.9 301.9 L442.3 302.7 L442.7 303.4 L443 304.2 L443.2 305 L443.3 305.7 L443.4 306.5 L443.4 307.3 L443.3 308.1 L443.1 308.8 L442.8 309.6 L442.5 310.4 L442.1 311.1 L441.6 311.9 L441.1 312.6 L440.4 313.4 L439.7 314.1 L439 314.8 L438.1 315.5 L437.2 316.2 L436.3 316.9 L435.2 317.6 L434.2 318.3 L433 318.9 L431.8 319.6 L430.6 320.2 L429.3 320.8 L428 321.4 L426.6 322 L425.2 322.5 L423.7 323.1 L422.3 323.6 L420.8 324.1 L419.3 324.6 L417.7 325 L416.2 325.5 L414.6 325.9 L413 326.3 L411.5 326.7 L409.9 327.1 L408.3 327.4 L406.8 327.8 L405.2 328.1 L403.7 328.4 L402.2 328.7 L400.7 328.9 L399.3 329.1 L397.9 329.4 L396.5 329.6 L395.1 329.8 L393.8 329.9 L392.6 330.1 L391.4 330.2 L390.2 330.4 L389.1 330.5 L388.1 330.6 L387.1 330.6 L386.2 330.7 L385.3 330.8 L384.5 330.8 L383.8 330.9 L383.1 330.9 L382.5 330.9 L382 331 L381.6 331 L381.3 331 L381 331 L380.8 331 L380.6 331 L380.6 331 L380.6 331 L380.7 331 L380.9 331 L381.2 331 L381.5 331 L382 331 L382.5 331.1 L383 331.1 L383.7 331.1 L384.4 331.2 L385.2 331.2 L386 331.3 L386.9 331.3 L387.9 331.4 L388.9 331.5 L390 331.6 L391.2 331.8 L392.4 331.9 L393.6 332 L394.9 332.2 L396.3 332.4 L397.6 332.6 L399.1 332.8 L400.5 333.1 L402 333.3 L403.5 333.6 L405 333.9 L406.5 334.2 L408.1 334.5 L409.6 334.9 L411.2 335.2 L412.8 335.6 L414.3 336 L415.9 336.4 L417.5 336.9 L419 337.3 L420.5 337.8 L422 338.3 L423.5 338.9 L424.9 339.4 L426.4 339.9 L427.7 340.5 L429.1 341.1 L430.4 341.7 L431.6 342.3 L432.8 343 L434 343.6 L435.1 344.3 L436.1 345 L437.1 345.6 L438 346.3 L438.8 347.1 L439.6 347.8 L440.3 348.5 L441 349.3 L441.5 350 L442 350.8 L442.5 351.5 L442.8 352.3 L443.1 353 L443.3 353.8 L443.4 354.6 L443.4 355.4 L443.4 356.1 L443.2 356.9 L443 357.7 L442.7 358.4 L442.4 359.2 L442 360 L441.5 360.7 L440.9 361.5 L440.2 362.2 L439.5 362.9 L438.7 363.7 L437.8 364.4 L436.9 365.1 L435.9 365.8 L434.9 366.4 L433.8 367.1 L432.6 367.7 L431.4 368.4 L430.2 369 L428.9 369.6 L427.5 370.2 L426.1 370.7 L424.7 371.3 L423.3 371.8 L421.8 372.3 L420.3 372.8 L418.8 373.3 L417.2 373.8 L415.7 374.2 L414.1 374.6 L412.5 375.1 L411 375.4 L409.4 375.8 L407.8 376.1 L406.3 376.5 L404.8 376.8 L403.2 377.1 L401.7 377.3 L400.3 377.6 L398.8 377.8 L397.4 378 L396 378.2 L394.7 378.4 L393.4 378.6 L392.2 378.7 L391 378.9 L389.9 379 L388.8 379.1 L387.7 379.2 L386.8 379.3 L385.9 379.3 L385 379.4 L384.3 379.5 L383.6 379.5 L382.9 379.5 L382.4 379.6 L381.9 379.6 L381.5 379.6 L381.2 379.6 L380.9 379.6 L380.7 379.6 L380.6 379.6 L380.6 379.6 L380.7 379.6 L380.8 379.6 L381 379.6 L381.3 379.6 L381.7 379.6 L382.1 379.6 L382.6 379.7 L383.2 379.7 L383.9 379.7 L384.6 379.8 L385.4 379.8 L386.3 379.9 L387.2 380 L388.2 380.1 L389.3 380.2 L390.4 380.3 L391.6 380.4 L392.8 380.5 L394 380.7 L395.4 380.9 L396.7 381.1 L398.1 381.3 L399.5 381.5 L401 381.7 L402.5 382 L404 382.3 L405.5 382.6 L407 382.9 L408.6 383.2 L410.2 383.6 L411.7 383.9 L413.3 384.3 L414.9 384.8 L416.4 385.2 L418 385.6 L419.5 386.1 L421 386.6 L422.5 387.1 L424 387.6 L425.4 388.2 L426.8 388.7 L428.2 389.3 L429.5 389.9 L430.8 390.5 L432 391.1 L433.2 391.8 L434.3 392.4 L435.4 393.1 L436.4 393.8 L437.4 394.5 L438.3 395.2 L439.1 395.9 L439.9 396.6 L440.5 397.4 L441.2 398.1 L441.7 398.8 L442.2 399.6 L442.6 400.4 L442.9 401.1 L443.1 401.9 L443.3 402.7 L443.4 403.4 L443.4 404.2 L443.3 405 L443.2 405.8 L442.9 406.5 L442.6 407.3 L442.3 408.1 L441.8 408.8 L441.3 409.6 L440.7 410.3 L440 411 L439.2 411.8 L438.4 412.5 L437.6 413.2 L436.6 413.9 L435.6 414.6" fill="none" stroke="#425242" stroke-width="1" stroke-linejoin="round"/><ellipse cx="435.5" cy="266.3" rx="4.1" ry="4.5" fill="#e6f2e6" stroke="#425242" stroke-width="1"/><ellipse cx="433.3" cy="411" rx="4.1" ry="4.5" fill="#e6f2e6" stroke="#425242" stroke-width="1"/><path d="M413.8 265.5 L412.8 266.2 L411.7 266.9 L410.6 267.5 L409.4 268.2 L408.2 268.8 L406.9 269.4 L405.6 270 L404.2 270.6 L402.8 271.1 L401.4 271.7 L399.9 272.2 L398.5 272.7 L396.9 273.2 L395.4 273.7 L393.9 274.1 L392.3 274.6 L390.7 275 L389.2 275.4 L387.6 275.8 L386 276.1 L384.5 276.5 L382.9 276.8 L381.4 277.1 L379.9 277.4 L378.4 277.6 L377 277.9 L375.5 278.1 L374.1 278.3 L372.8 278.5 L371.5 278.7 L370.2 278.8 L369 279 L367.8 279.1 L366.7 279.2 L365.6 279.3 L364.6 279.4 L363.6 279.5 L362.8 279.6 L362 279.6 L361.2 279.7 L360.5 279.7 L359.9 279.7 L359.4 279.8 L358.9 279.8 L358.6 279.8 L358.3 279.8 L358 279.8 L357.9 279.8 L357.8 279.8 L357.8 279.8 L357.9 279.8 L358.1 279.8 L358.3 279.8 L358.6 279.8 L359 279.8 L359.5 279.8 L360 279.9 L360.7 279.9 L361.3 279.9 L362.1 280 L362.9 280 L363.8 280.1 L364.8 280.2 L365.8 280.3 L366.9 280.4 L368 280.5 L369.2 280.6 L370.4 280.8 L371.7 281 L373 281.1 L374.4 281.3 L375.8 281.5 L377.2 281.8 L378.7 282 L380.2 282.3 L381.7 282.6 L383.2 282.9 L384.8 283.2 L386.3 283.5 L387.9 283.9 L389.5 284.3 L391 284.7 L392.6 285.1 L394.2 285.5 L395.7 286 L397.2 286.5 L398.7 287 L400.2 287.5 L401.7 288 L403.1 288.6 L404.5 289.1 L405.8 289.7 L407.2 290.3 L408.4 290.9 L409.6 291.6 L410.8 292.2 L411.9 292.9 L413 293.5 L414 294.2 L414.9 294.9 L415.8 295.6 L416.6 296.3 L417.3 297.1 L418 297.8 L418.6 298.6 L419.1 299.3 L419.5 300.1 L419.9 300.8 L420.2 301.6 L420.4 302.4 L420.5 303.1 L420.6 303.9 L420.6 304.7 L420.5 305.5 L420.3 306.2 L420 307 L419.7 307.8 L419.3 308.5 L418.8 309.3 L418.3 310 L417.6 310.8 L416.9 311.5 L416.2 312.2 L415.3 312.9 L414.4 313.6 L413.5 314.3 L412.4 315 L411.4 315.7 L410.2 316.3 L409 317 L407.8 317.6 L406.5 318.2 L405.2 318.8 L403.8 319.4 L402.4 319.9 L400.9 320.5 L399.5 321 L398 321.5 L396.5 322 L394.9 322.4 L393.4 322.9 L391.8 323.3 L390.2 323.7 L388.7 324.1 L387.1 324.5 L385.5 324.8 L384 325.2 L382.4 325.5 L380.9 325.8 L379.4 326.1 L377.9 326.3 L376.5 326.5 L375.1 326.8 L373.7 327 L372.3 327.2 L371 327.3 L369.8 327.5 L368.6 327.6 L367.4 327.8 L366.3 327.9 L365.3 328 L364.3 328 L363.4 328.1 L362.5 328.2 L361.7 328.2 L361 328.3 L360.3 328.3 L359.7 328.3 L359.2 328.4 L358.8 328.4 L358.5 328.4 L358.2 328.4 L358 328.4 L357.8 328.4 L357.8 328.4 L357.8 328.4 L357.9 328.4 L358.1 328.4 L358.4 328.4 L358.7 328.4 L359.2 328.4 L359.7 328.5 L360.2 328.5 L360.9 328.5 L361.6 328.6 L362.4 328.6 L363.2 328.7 L364.1 328.7 L365.1 328.8 L366.1 328.9 L367.2 329 L368.4 329.2 L369.6 329.3 L370.8 329.4 L372.1 329.6 L373.5 329.8 L374.8 330 L376.3 330.2 L377.7 330.5 L379.2 330.7 L380.7 331 L382.2 331.3 L383.7 331.6 L385.3 331.9 L386.8 332.3 L388.4 332.6 L390 333 L391.5 333.4 L393.1 333.8 L394.7 334.3 L396.2 334.7 L397.7 335.2 L399.2 335.7 L400.7 336.3 L402.1 336.8 L403.6 337.3 L404.9 337.9 L406.3 338.5 L407.6 339.1 L408.8 339.7 L410 340.4 L411.2 341 L412.3 341.7 L413.3 342.4 L414.3 343 L415.2 343.7 L416 344.5 L416.8 345.2 L417.5 345.9 L418.2 346.7 L418.7 347.4 L419.2 348.2 L419.7 348.9 L420 349.7 L420.3 350.4 L420.5 351.2 L420.6 352 L420.6 352.8 L420.6 353.5 L420.4 354.3 L420.2 355.1 L419.9 355.8 L419.6 356.6 L419.2 357.4 L418.7 358.1 L418.1 358.9 L417.4 359.6 L416.7 360.3 L415.9 361.1 L415 361.8 L414.1 362.5 L413.1 363.2 L412.1 363.8 L411 364.5 L409.8 365.1 L408.6 365.8 L407.4 366.4 L406.1 367 L404.7 367.6 L403.3 368.1 L401.9 368.7 L400.5 369.2 L399 369.7 L397.5 370.2 L396 370.7 L394.4 371.2 L392.9 371.6 L391.3 372 L389.7 372.5 L388.2 372.8 L386.6 373.2 L385 373.5 L383.5 373.9 L382 374.2 L380.4 374.5 L378.9 374.7 L377.5 375 L376 375.2 L374.6 375.4 L373.2 375.6 L371.9 375.8 L370.6 376 L369.4 376.1 L368.2 376.3 L367.1 376.4 L366 376.5 L364.9 376.6 L364 376.7 L363.1 376.7 L362.2 376.8 L361.5 376.9 L360.8 376.9 L360.1 376.9 L359.6 377 L359.1 377 L358.7 377 L358.4 377 L358.1 377 L357.9 377 L357.8 377 L357.8 377 L357.9 377 L358 377 L358.2 377 L358.5 377 L358.9 377 L359.3 377 L359.8 377.1 L360.4 377.1 L361.1 377.1 L361.8 377.2 L362.6 377.2 L363.5 377.3 L364.4 377.4 L365.4 377.5 L366.5 377.6 L367.6 377.7 L368.8 377.8 L370 377.9 L371.2 378.1 L372.6 378.3 L373.9 378.5 L375.3 378.7 L376.7 378.9 L378.2 379.1 L379.7 379.4 L381.2 379.7 L382.7 380 L384.2 380.3 L385.8 380.6 L387.4 381 L388.9 381.3 L390.5 381.7 L392.1 382.2 L393.6 382.6 L395.2 383 L396.7 383.5 L398.2 384 L399.7 384.5 L401.2 385 L402.6 385.6 L404 386.1 L405.4 386.7 L406.7 387.3 L408 387.9 L409.2 388.5 L410.4 389.2 L411.5 389.8 L412.6 390.5 L413.6 391.2 L414.6 391.9 L415.5 392.6 L416.3 393.3 L417.1 394 L417.7 394.8 L418.4 395.5 L418.9 396.2 L419.4 397 L419.8 397.8 L420.1 398.5 L420.3 399.3 L420.5 400.1 L420.6 400.8 L420.6 401.6 L420.5 402.4 L420.4 403.2 L420.1 403.9 L419.8 404.7 L419.5 405.5 L419 406.2 L418.5 407 L417.9 407.7 L417.2 408.4 L416.4 409.2 L415.6 409.9 L414.8 410.6 L413.8 411.3 L412.8 412" fill="none" stroke="#4e4e68" stroke-width="1" stroke-linejoin="round"/><ellipse cx="412.7" cy="263.7" rx="4.1" ry="4.5" fill="#e8e8f4" stroke="#4e4e68" stroke-width="1"/><ellipse cx="410.5" cy="408.4" rx="4.1" ry="4.5" fill="#e8e8f4" stroke="#4e4e68" stroke-width="1"/>


<!-- crosshair -->
<path d="M739.5 403.5 H779.5 M760.5 383.5 V424" stroke="#6c6c6c" stroke-width="1" fill="none"/>
<!-- UCS icon -->
<path d="M17.5 462 V510 M17.5 462 L47.5 510 M17.5 503.5 H24.5 V510" stroke="#8c8cba" stroke-width="0.9" fill="none"/>
<path d="M18.5 477 l1.7 2.3 l1.7 -2.3 M20.2 479.3 v3 M33 503 l6 6 M39 503 l-6 6" stroke="#8c8cba" stroke-width="0.8" fill="none"/>
</svg>
</div></body></html>
